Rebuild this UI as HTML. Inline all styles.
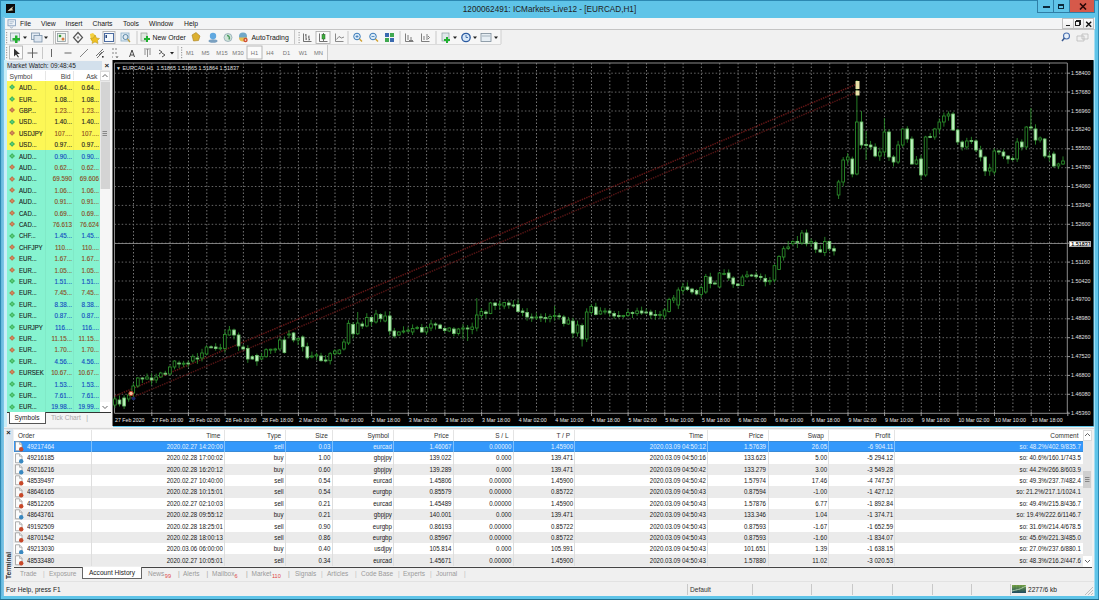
<!DOCTYPE html><html><head><meta charset="utf-8"><style>
*{box-sizing:border-box;margin:0;padding:0}
html,body{width:1099px;height:600px;overflow:hidden}
body{position:relative;background:#5fc4e8;font-family:"Liberation Sans", sans-serif;font-size:8px;color:#222}
.abs{position:absolute}
b{position:absolute}
.cd .bu{fill:#000}
.cd .be{fill:#bff2bf;stroke:#6cc06c}
.pl{position:absolute;left:1071px;font-size:5.4px;color:#e0e0e0;line-height:9px;white-space:nowrap}
.pl.cur{background:#fff;color:#000;left:1069px;width:22px;height:6.6px;padding:0 0 0 1.2px;border:0.6px solid #aaa;line-height:5.6px;top:240.8px !important;overflow:hidden;-webkit-text-stroke:0.15px #000}
.tl{position:absolute;top:415.6px;font-size:5.25px;color:#e8e8e8;line-height:8px;white-space:nowrap}
.title-chart{position:absolute;left:116px;top:63.5px;font-size:5.4px;color:#e0e0e0;white-space:nowrap;line-height:8px}
.mwhead{left:6.5px;top:61px;width:95px;height:9px;background:#d3e0ec;font-size:6.5px;line-height:10px;padding-left:0.5px;color:#1e1e1e}
.mwx{position:absolute;left:98px;top:-0.5px;font-size:8px;font-weight:bold;color:#222}
.mwcols{left:6.5px;top:70px;width:93px;height:11.2px;background:#fff}
.mwcols span{position:absolute;top:1.5px;font-size:6.8px;line-height:9px;color:#444}
.mwcols b{top:1px;width:1px;height:9px;background:#e6e6e6}
.mwr{left:6.5px;width:93px}
.mwr.y{background:#fcf756}
.mwr.m{background:#86f3d0}
.mwr b{top:0;width:1px;height:100%;background:rgba(0,0,0,0.04)}
.mwr span{position:absolute;top:2.1px;font-size:7.2px;line-height:9px;white-space:nowrap;-webkit-text-stroke:0.12px currentColor}
.mwr .sy{left:12px;color:#1a1a1a;transform:scaleX(0.84);transform-origin:0 0}
.mwr .bd{left:39px;width:26px;text-align:right;transform:scaleX(0.87);transform-origin:100% 0}
.mwr .ak{left:66px;width:26px;text-align:right;transform:scaleX(0.87);transform-origin:100% 0}
.mwr .r{color:#8a4a20} .mwr .b{color:#1048c0} .mwr .n{color:#222}
.dm{position:absolute;left:3px;top:4.2px;width:4.2px;height:4.2px;transform:rotate(45deg)}
.dm.g{background:radial-gradient(#6ad88a,#1e9a3e)} .dm.r{background:radial-gradient(#e0946a,#a85a30)}
.thead{top:429.5px;height:11.3px;background:#fff}
.hc{position:absolute;top:2px;font-size:6.5px;line-height:8px;color:#333;white-space:nowrap}
.hsep{top:0;width:1px;height:11px;background:#e4e4e4}
.trow.wh{background:#fff} .trow.alt{background:#ebebeb} .trow.sel{background:#3398fb;color:#e8f4ff;box-shadow:inset 0 1px #3a8bd6,inset 0 -1px #3a8bd6}
.tc{position:absolute;top:2.2px;font-size:6.8px;line-height:8px;white-space:nowrap;color:#161616;transform:scaleX(0.9);transform-origin:100% 0} .tc.l{transform-origin:0 0}
.trow.sel .tc{color:#e8f4ff}
.vsep{top:0;width:1px;height:100%;background:#dedede} .sel .vsep{background:#7fc0fa}
.ticon{position:absolute;left:2.5px;top:1px;width:7px;height:9px;background:#fafafa;border:0.8px solid #9a9a9a}
.ticon::after{content:"";position:absolute;right:-2px;bottom:-2px;width:4.5px;height:4.5px;border-radius:50%}
.ticon.s::after{background:#c84a30} .ticon.b::after{background:#3a8ac0}
.menu span{position:absolute;top:19.5px;font-size:6.8px;line-height:8px;color:#161616}
.tabs span{position:absolute;font-size:6.5px;color:#9a9a9a;top:2.5px;line-height:8px;white-space:nowrap}
.st{position:absolute;top:583.5px;height:11.5px;width:1px;background:#c8c8c8}
.tbt{top:33.5px;font-size:6.9px;line-height:8px;color:#151515;white-space:nowrap}
.tft{top:49px;width:20px;text-align:center;font-size:5.8px;line-height:8px;color:#777}
</style></head><body>
<div class="abs" style="left:0;top:0;width:1099px;height:1px;background:#2c88b2"></div>
<div class="abs" style="left:0;top:0;width:1px;height:600px;background:#2c88b2"></div>
<div class="abs" style="left:1093.5px;top:17px;width:1.5px;height:579px;background:#a6dcf0"></div>
<div class="abs" style="left:1098px;top:0;width:1px;height:600px;background:#2c88b2"></div>
<div class="abs" style="left:0;top:598.5px;width:1099px;height:1.5px;background:#22708f"></div>
<svg class="abs" style="left:6px;top:4px" width="9" height="9"><rect width="9" height="9" fill="#0c0c0c"/><path d="M1.5 7.2C3 5.5 4.5 4 7.8 2.2 6 4.2 5.5 5.5 7.5 6.2 5 6.6 3.2 6.8 1.5 7.2z" fill="#d8d0b0"/></svg>
<div class="abs" style="left:0;top:3.5px;width:1099px;text-align:center;font-size:8.2px;color:#222;line-height:11px;padding-left:0px">1200062491: ICMarkets-Live12 - [EURCAD,H1]</div>
<div class="abs" style="left:1037px;top:0;width:17px;height:12.5px;background:#5fc4e8;border:1px solid #2f7ea6;border-top:0"><div style="position:absolute;left:4.5px;top:6px;width:7px;height:2px;background:#0b2a3c"></div></div>
<div class="abs" style="left:1053.5px;top:0;width:15px;height:12.5px;background:#5fc4e8;border-bottom:1px solid #2f7ea6"><div style="position:absolute;left:4.5px;top:3.5px;width:6px;height:5px;border:1.5px solid #0b2a3c;border-top-width:2px"></div></div>
<div class="abs" style="left:1068.5px;top:0;width:26.5px;height:12.5px;background:#d6594a;border:1px solid #2f7ea6;border-top:0"><svg style="position:absolute;left:9px;top:3px" width="8" height="7"><path d="M1 0.5l6 6M7 0.5l-6 6" stroke="#2a0808" stroke-width="1.6"/></svg></div>
<div class="abs" style="left:4px;top:17.5px;width:1090.5px;height:12px;background:#f3f4f5;border-bottom:1px solid #c4c4c4"></div>
<svg class="abs" style="left:6.5px;top:18.5px" width="10" height="10"><rect x="1" y="0.8" width="7.5" height="6" fill="#eef3f8" stroke="#7c98b8" stroke-width="0.8"/><path d="M2.5 2.8h4.5M2.5 4.6h3" stroke="#90a8c0" stroke-width="0.7"/><path d="M3 7.5l1.5 1.8 1.5-1.8" stroke="#8aa0b8" stroke-width="0.8" fill="none"/></svg>
<div class="abs menu"><span style="left:20px">File</span><span style="left:41px">View</span><span style="left:65.5px">Insert</span><span style="left:92.5px">Charts</span><span style="left:123px">Tools</span><span style="left:149px">Window</span><span style="left:184px">Help</span></div>
<div class="abs" style="left:1062px;top:17.7px;width:32px;height:11.5px;background:linear-gradient(#fdfdfd,#ececec);border:1px solid #c0c0c0"></div>
<div class="abs" style="left:1072.5px;top:18px;width:1px;height:11px;background:#c0c0c0"></div><div class="abs" style="left:1083px;top:18px;width:1px;height:11px;background:#c0c0c0"></div>
<div class="abs" style="left:1065.5px;top:24.5px;width:4px;height:1.5px;background:#222"></div>
<div class="abs" style="left:1075px;top:20.5px;width:5px;height:5px;border:1px solid #222;box-shadow:1px -1px 0 0 #222"></div>
<svg class="abs" style="left:1085px;top:20.5px" width="8" height="7"><path d="M1.2 0.8l5 5M6.2 0.8l-5 5" stroke="#111" stroke-width="1.4"/></svg>
<svg class="abs" style="left:0;top:0" width="1099" height="62" viewBox="0 0 1099 62">
<rect x="4" y="30" width="1090" height="30.5" fill="#f1f1f1"/>
<rect x="4" y="30" width="291" height="14" fill="#f6f6f6"/>
<rect x="297" y="30" width="204" height="14" fill="#f6f6f6"/>
<line x1="4" y1="44.5" x2="501" y2="44.5" stroke="#dadada" stroke-width="1"/>
<rect x="4" y="45" width="323" height="15" fill="#f6f6f6"/>
<line x1="327.5" y1="45" x2="327.5" y2="60" stroke="#c8c8c8"/>
<line x1="501" y1="30" x2="501" y2="44" stroke="#d0d0d0"/>
<line x1="294.5" y1="30" x2="294.5" y2="44" stroke="#c8c8c8" stroke-width="1"/>
<rect x="6.0" y="32" width="1.2" height="1.2" fill="#a0a0a0"/><rect x="6.0" y="34.5" width="1.2" height="1.2" fill="#a0a0a0"/><rect x="6.0" y="37.0" width="1.2" height="1.2" fill="#a0a0a0"/><rect x="6.0" y="39.5" width="1.2" height="1.2" fill="#a0a0a0"/><rect x="6.0" y="42.0" width="1.2" height="1.2" fill="#a0a0a0"/>
<rect x="10.5" y="33" width="9" height="8" fill="#e6eef0" stroke="#8aa0a8" stroke-width="0.8"/>
<path d="M15 35.5h2.5v2.5h2.5v2.5h-2.5v2.5h-2.5v-2.5h-2.5v-2.5h2.5z" fill="#22b030"/>
<path d="M23 36.5h4l-2 2.5z" fill="#222"/>
<rect x="31.5" y="33" width="8" height="6.5" fill="#e4ecf4" stroke="#7890a8" stroke-width="0.8"/>
<rect x="34" y="35.5" width="8" height="6.5" fill="#dde6f0" stroke="#7890a8" stroke-width="0.8"/>
<path d="M44 36.5h4l-2 2.5z" fill="#222"/>
<line x1="53.5" y1="31" x2="53.5" y2="44" stroke="#c8c8c8" stroke-width="1"/>
<rect x="55.5" y="31.5" width="12.5" height="12.0" fill="#fbfbfb" stroke="#a8a8a8" stroke-width="0.8"/>
<rect x="57.5" y="33.5" width="8" height="8" fill="#eef4ea" stroke="#8a9aa0" stroke-width="0.8"/>
<circle cx="60" cy="36" r="1.3" fill="#3a9a3a"/><circle cx="63" cy="39" r="1.5" fill="#d87a40"/>
<path d="M78 32.5l4.5 5-4.5 5-4.5-5z" fill="none" stroke="#555" stroke-width="1.2"/><circle cx="78" cy="37.5" r="1.2" fill="#888"/>
<path d="M90 34l3 -1 3 3-1 4 -4 1z" fill="#f3d040"/><path d="M95 35l1.5 3 3 .5-2 2 .5 3-3-1.5-3 1.5.5-3-2-2 3-.5z" fill="#f0c020" stroke="#b09020" stroke-width="0.5"/>
<rect x="103" y="31.5" width="12" height="12.0" fill="#fbfbfb" stroke="#a8a8a8" stroke-width="0.8"/>
<rect x="104.5" y="33.5" width="9" height="8" fill="#f4f8fc" stroke="#4a6aa0" stroke-width="1"/><rect x="105.5" y="35" width="1.5" height="3" fill="#2a4a80"/>
<rect x="121" y="33" width="8" height="8" fill="#dfeaf2" stroke="#8ab0c8" stroke-width="0.8"/><circle cx="125.5" cy="37" r="2.5" fill="none" stroke="#5a88a8" stroke-width="1"/><line x1="127.5" y1="39" x2="130" y2="42" stroke="#c0a040" stroke-width="1.2"/>
<line x1="137" y1="31" x2="137" y2="44" stroke="#c8c8c8" stroke-width="1"/>
<rect x="141" y="33" width="6" height="8" fill="#e0e8e0" stroke="#909890" stroke-width="0.7"/><path d="M146 36h2v2h2v2h-2v2h-2v-2h-2v-2h2z" fill="#20b030"/>
<path d="M192 35l4-2.5 4 3.5-1.5 4.5-5 .5z" fill="#dcb030" stroke="#a88020" stroke-width="0.6"/>
<ellipse cx="213" cy="41" rx="4.5" ry="1.8" fill="#7aa0c0"/><circle cx="213" cy="36" r="3.2" fill="#60a8e0"/>
<circle cx="228" cy="37.5" r="4" fill="#cfe4d8" stroke="#8aa0b0" stroke-width="0.7"/><path d="M227 35.5c2 0 3 2 2 4" stroke="#4a9a60" stroke-width="1.5" fill="none"/>
<circle cx="243" cy="36.5" r="4" fill="#70a8c8"/><path d="M239 37.5a4 4 0 0 0 8 0z" fill="#e8c050"/><circle cx="245.5" cy="40" r="2.2" fill="#d05030"/><circle cx="245.5" cy="40" r="0.8" fill="#fff"/>
<rect x="298.5" y="32" width="1.2" height="1.2" fill="#a0a0a0"/><rect x="298.5" y="34.5" width="1.2" height="1.2" fill="#a0a0a0"/><rect x="298.5" y="37.0" width="1.2" height="1.2" fill="#a0a0a0"/><rect x="298.5" y="39.5" width="1.2" height="1.2" fill="#a0a0a0"/><rect x="298.5" y="42.0" width="1.2" height="1.2" fill="#a0a0a0"/>
<path d="M303.5 33.5v8h8M306 34v6M305 35h1M306 39h1M309 35.5v5M308 37h1M309 39.5h1" stroke="#444" stroke-width="0.75" fill="none"/>
<rect x="316" y="31.5" width="14" height="12.0" fill="#fbfbfb" stroke="#a8a8a8" stroke-width="0.8"/>
<path d="M319.5 33.5v8h8M323.5 33v8" stroke="#444" stroke-width="0.75" fill="none"/><rect x="322" y="34.5" width="3" height="4.5" fill="#40b040" stroke="#206020" stroke-width="0.5"/>
<path d="M335.5 33.5v8h8M336.5 39.5l2.5-3 2.5 1.5 2.5-1" stroke="#666" stroke-width="0.75" fill="none"/>
<line x1="348" y1="31" x2="348" y2="44" stroke="#c8c8c8" stroke-width="1"/>
<circle cx="357" cy="36.5" r="3.3" fill="#dcecf8" stroke="#3a7ab8" stroke-width="1"/><path d="M355.5 36.5h3M357 35v3" stroke="#3a7ab8" stroke-width="0.8"/><line x1="359.5" y1="39" x2="362" y2="41.5" stroke="#d0a030" stroke-width="1.4"/>
<circle cx="373" cy="36.5" r="3.3" fill="#dcecf8" stroke="#3a7ab8" stroke-width="1"/><path d="M371.5 36.5h3" stroke="#3a7ab8" stroke-width="0.8"/><line x1="375.5" y1="39" x2="378" y2="41.5" stroke="#d0a030" stroke-width="1.4"/>
<rect x="385" y="33" width="4" height="4" fill="#3a6ab0"/><rect x="390" y="33" width="4" height="4" fill="#40a850"/><rect x="385" y="38" width="4" height="4" fill="#40a850"/><rect x="390" y="38" width="4" height="4" fill="#3a6ab0"/>
<line x1="400" y1="31" x2="400" y2="44" stroke="#c8c8c8" stroke-width="1"/>
<path d="M405.5 33.5v8h8M408 35v5M411 37v3M409 40.5h4" stroke="#555" stroke-width="0.75" fill="none"/>
<path d="M421.5 33.5v8h8M424 36v4M427 34v6M428 36l1.5 1.5-1.5 1.5" stroke="#555" stroke-width="0.75" fill="none"/>
<line x1="436" y1="31" x2="436" y2="44" stroke="#c8c8c8" stroke-width="1"/>
<rect x="442" y="33" width="7" height="8" fill="#dfe8ea" stroke="#8a9aa0" stroke-width="0.7"/><path d="M446 37h2v2h2v2h-2v2h-2v-2h-2v-2h2z" fill="#20b030"/><path d="M453 36.5h4l-2 2.5z" fill="#222"/>
<circle cx="466" cy="37.5" r="4.2" fill="#d8e8f8" stroke="#2a5aa0" stroke-width="1.3"/><path d="M466 35v2.5h2" stroke="#2a5aa0" stroke-width="0.8" fill="none"/><path d="M473 36.5h4l-2 2.5z" fill="#222"/>
<rect x="481" y="33.5" width="10" height="8" fill="#e6eef4" stroke="#7a8a98" stroke-width="0.8"/><line x1="482" y1="36" x2="490" y2="36" stroke="#7a8a98" stroke-width="0.6"/><path d="M494 36.5h4l-2 2.5z" fill="#222"/>
<rect x="6.0" y="47" width="1.2" height="1.2" fill="#a0a0a0"/><rect x="6.0" y="49.5" width="1.2" height="1.2" fill="#a0a0a0"/><rect x="6.0" y="52.0" width="1.2" height="1.2" fill="#a0a0a0"/><rect x="6.0" y="54.5" width="1.2" height="1.2" fill="#a0a0a0"/><rect x="6.0" y="57.0" width="1.2" height="1.2" fill="#a0a0a0"/>
<rect x="9.5" y="46" width="13.0" height="13" fill="#fbfbfb" stroke="#a8a8a8" stroke-width="0.8"/>
<path d="M14 48.5v8l2-2 2 3 1-.6-2-3h3z" fill="#333"/>
<path d="M32.5 48v10M27.5 53h10" stroke="#555" stroke-width="0.9"/>
<line x1="42.5" y1="47" x2="42.5" y2="59" stroke="#c8c8c8" stroke-width="1"/>
<line x1="51.5" y1="49" x2="51.5" y2="57" stroke="#666" stroke-width="1"/>
<line x1="64.5" y1="53" x2="71.5" y2="53" stroke="#666" stroke-width="1"/>
<line x1="80" y1="57" x2="88" y2="49" stroke="#777" stroke-width="0.9"/>
<path d="M96 56l7-7M97 58l7-7M99 55l3-3" stroke="#666" stroke-width="0.9"/><rect x="102" y="56" width="1.6" height="1.6" fill="#333"/>
<path d="M112 49h2M115 49h2M112 53h2M115 53h2M112 57h1M116 56l1 2 1-2" stroke="#777" stroke-width="0.9" fill="none"/>
<path d="M129.5 57l2.5-7 2.5 7M130.5 55h3" stroke="#444" stroke-width="1" fill="none"/>
<path d="M144 49h7M147.5 49v8M145 50v5M150 50v5" stroke="#777" stroke-width="0.8" fill="none"/>
<path d="M159 50l3 2-3 2M162 53l3 2-3 2" stroke="#555" stroke-width="1" fill="none"/><path d="M170 52h4l-2 2.5z" fill="#222"/>
<line x1="178" y1="46" x2="178" y2="59" stroke="#c8c8c8" stroke-width="1"/>
<rect x="181.0" y="47" width="1.2" height="1.2" fill="#a0a0a0"/><rect x="181.0" y="49.5" width="1.2" height="1.2" fill="#a0a0a0"/><rect x="181.0" y="52.0" width="1.2" height="1.2" fill="#a0a0a0"/><rect x="181.0" y="54.5" width="1.2" height="1.2" fill="#a0a0a0"/><rect x="181.0" y="57.0" width="1.2" height="1.2" fill="#a0a0a0"/>
<rect x="247" y="46" width="15" height="13" fill="#fbfbfb" stroke="#a8a8a8" stroke-width="0.8"/>
</svg>
<div class="abs tbt" style="left:152.5px">New Order</div>
<div class="abs tbt" style="left:251.5px">AutoTrading</div>
<div class="abs tft" style="left:180px">M1</div>
<div class="abs tft" style="left:195.5px">M5</div>
<div class="abs tft" style="left:212px">M15</div>
<div class="abs tft" style="left:228px">M30</div>
<div class="abs tft" style="left:244.5px">H1</div>
<div class="abs tft" style="left:260px">H4</div>
<div class="abs tft" style="left:276.5px">D1</div>
<div class="abs tft" style="left:293px">W1</div>
<div class="abs tft" style="left:308.5px">MN</div>
<svg class="abs" style="left:1058px;top:31px" width="34" height="14"><circle cx="8.5" cy="5" r="3" fill="#e8f0f8" stroke="#4a70b0" stroke-width="1.1"/><line x1="6.5" y1="7" x2="4" y2="10" stroke="#3a5a90" stroke-width="1.5"/><path d="M19 5h7v5h-7z M24 3h6v5h-6z" fill="#f0f0f0" stroke="#bbb" stroke-width="0.8"/></svg>
<div class="abs" style="left:4px;top:60px;width:109px;height:367px;background:#f4f4f4"></div>
<div class="abs" style="left:1px;top:17px;width:3.5px;height:579px;background:linear-gradient(90deg,#62b6dc,#8ccfee)"></div>
<div class="abs" style="left:4px;top:60px;width:2.5px;height:367px;background:#c8eef8"></div>
<div class="abs mwhead">Market Watch: 09:48:45<span class="mwx">&#215;</span></div>
<div class="abs mwcols"><span style="left:3px">Symbol</span><span style="left:39px;width:25px;text-align:right">Bid</span><span style="left:66px;width:25px;text-align:right">Ask</span><b style="left:38.5px"></b><b style="left:66px"></b></div>
<div class="abs mwr y" style="top:81.2px;height:11.50px"><i class="dm g"></i><span class="sy">AUD...</span><span class="bd n">0.64...</span><span class="ak n">0.64...</span><b style="left:38.5px"></b><b style="left:66px"></b></div>
<div class="abs mwr y" style="top:92.6px;height:11.50px"><i class="dm g"></i><span class="sy">EUR...</span><span class="bd n">1.08...</span><span class="ak n">1.08...</span><b style="left:38.5px"></b><b style="left:66px"></b></div>
<div class="abs mwr y" style="top:104.0px;height:11.50px"><i class="dm r"></i><span class="sy">GBP...</span><span class="bd r">1.23...</span><span class="ak r">1.23...</span><b style="left:38.5px"></b><b style="left:66px"></b></div>
<div class="abs mwr y" style="top:115.4px;height:11.50px"><i class="dm g"></i><span class="sy">USD...</span><span class="bd n">1.40...</span><span class="ak n">1.40...</span><b style="left:38.5px"></b><b style="left:66px"></b></div>
<div class="abs mwr y" style="top:126.8px;height:11.50px"><i class="dm r"></i><span class="sy">USDJPY</span><span class="bd r">107....</span><span class="ak r">107....</span><b style="left:38.5px"></b><b style="left:66px"></b></div>
<div class="abs mwr y" style="top:138.2px;height:11.50px"><i class="dm g"></i><span class="sy">USD...</span><span class="bd n">0.97...</span><span class="ak n">0.97...</span><b style="left:38.5px"></b><b style="left:66px"></b></div>
<div class="abs mwr m" style="top:149.6px;height:11.50px"><i class="dm g"></i><span class="sy">AUD...</span><span class="bd b">0.90...</span><span class="ak b">0.90...</span><b style="left:38.5px"></b><b style="left:66px"></b></div>
<div class="abs mwr m" style="top:161.0px;height:11.50px"><i class="dm r"></i><span class="sy">AUD...</span><span class="bd r">0.62...</span><span class="ak r">0.62...</span><b style="left:38.5px"></b><b style="left:66px"></b></div>
<div class="abs mwr m" style="top:172.4px;height:11.50px"><i class="dm r"></i><span class="sy">AUD...</span><span class="bd r">69.590</span><span class="ak r">69.606</span><b style="left:38.5px"></b><b style="left:66px"></b></div>
<div class="abs mwr m" style="top:183.8px;height:11.50px"><i class="dm r"></i><span class="sy">AUD...</span><span class="bd r">1.06...</span><span class="ak r">1.06...</span><b style="left:38.5px"></b><b style="left:66px"></b></div>
<div class="abs mwr m" style="top:195.2px;height:11.50px"><i class="dm r"></i><span class="sy">AUD...</span><span class="bd r">0.91...</span><span class="ak r">0.91...</span><b style="left:38.5px"></b><b style="left:66px"></b></div>
<div class="abs mwr m" style="top:206.6px;height:11.50px"><i class="dm r"></i><span class="sy">CAD...</span><span class="bd r">0.69...</span><span class="ak r">0.69...</span><b style="left:38.5px"></b><b style="left:66px"></b></div>
<div class="abs mwr m" style="top:218.0px;height:11.50px"><i class="dm r"></i><span class="sy">CAD...</span><span class="bd r">76.613</span><span class="ak r">76.624</span><b style="left:38.5px"></b><b style="left:66px"></b></div>
<div class="abs mwr m" style="top:229.4px;height:11.50px"><i class="dm g"></i><span class="sy">CHF...</span><span class="bd b">1.45...</span><span class="ak b">1.45...</span><b style="left:38.5px"></b><b style="left:66px"></b></div>
<div class="abs mwr m" style="top:240.8px;height:11.50px"><i class="dm r"></i><span class="sy">CHFJPY</span><span class="bd r">110....</span><span class="ak r">110....</span><b style="left:38.5px"></b><b style="left:66px"></b></div>
<div class="abs mwr m" style="top:252.2px;height:11.50px"><i class="dm r"></i><span class="sy">EUR...</span><span class="bd r">1.67...</span><span class="ak r">1.67...</span><b style="left:38.5px"></b><b style="left:66px"></b></div>
<div class="abs mwr m" style="top:263.6px;height:11.50px"><i class="dm r"></i><span class="sy">EUR...</span><span class="bd r">1.05...</span><span class="ak r">1.05...</span><b style="left:38.5px"></b><b style="left:66px"></b></div>
<div class="abs mwr m" style="top:275.0px;height:11.50px"><i class="dm g"></i><span class="sy">EUR...</span><span class="bd b">1.51...</span><span class="ak b">1.51...</span><b style="left:38.5px"></b><b style="left:66px"></b></div>
<div class="abs mwr m" style="top:286.4px;height:11.50px"><i class="dm r"></i><span class="sy">EUR...</span><span class="bd r">7.45...</span><span class="ak r">7.45...</span><b style="left:38.5px"></b><b style="left:66px"></b></div>
<div class="abs mwr m" style="top:297.8px;height:11.50px"><i class="dm g"></i><span class="sy">EUR...</span><span class="bd b">8.38...</span><span class="ak b">8.38...</span><b style="left:38.5px"></b><b style="left:66px"></b></div>
<div class="abs mwr m" style="top:309.2px;height:11.50px"><i class="dm g"></i><span class="sy">EUR...</span><span class="bd b">0.87...</span><span class="ak b">0.87...</span><b style="left:38.5px"></b><b style="left:66px"></b></div>
<div class="abs mwr m" style="top:320.6px;height:11.50px"><i class="dm g"></i><span class="sy">EURJPY</span><span class="bd b">116....</span><span class="ak b">116....</span><b style="left:38.5px"></b><b style="left:66px"></b></div>
<div class="abs mwr m" style="top:332.0px;height:11.50px"><i class="dm r"></i><span class="sy">EUR...</span><span class="bd r">11.15...</span><span class="ak r">11.15...</span><b style="left:38.5px"></b><b style="left:66px"></b></div>
<div class="abs mwr m" style="top:343.4px;height:11.50px"><i class="dm r"></i><span class="sy">EUR...</span><span class="bd r">1.70...</span><span class="ak r">1.70...</span><b style="left:38.5px"></b><b style="left:66px"></b></div>
<div class="abs mwr m" style="top:354.8px;height:11.50px"><i class="dm g"></i><span class="sy">EUR...</span><span class="bd b">4.56...</span><span class="ak b">4.56...</span><b style="left:38.5px"></b><b style="left:66px"></b></div>
<div class="abs mwr m" style="top:366.2px;height:11.50px"><i class="dm r"></i><span class="sy">EURSEK</span><span class="bd r">10.67...</span><span class="ak r">10.67...</span><b style="left:38.5px"></b><b style="left:66px"></b></div>
<div class="abs mwr m" style="top:377.6px;height:11.50px"><i class="dm g"></i><span class="sy">EUR...</span><span class="bd b">1.53...</span><span class="ak b">1.53...</span><b style="left:38.5px"></b><b style="left:66px"></b></div>
<div class="abs mwr m" style="top:389.0px;height:11.50px"><i class="dm g"></i><span class="sy">EUR...</span><span class="bd b">7.61...</span><span class="ak b">7.61...</span><b style="left:38.5px"></b><b style="left:66px"></b></div>
<div class="abs mwr m" style="top:400.4px;height:11.50px"><i class="dm g"></i><span class="sy">EUR...</span><span class="bd b">19.98...</span><span class="ak b">19.99...</span><b style="left:38.5px"></b><b style="left:66px"></b></div>
<div class="abs" style="left:99.5px;top:70px;width:10.5px;height:343px;background:#e9e9e9"></div>
<div class="abs" style="left:100px;top:70.5px;width:9.5px;height:10.5px;background:#fff;border:0.8px solid #dcdcdc"></div>
<svg class="abs" style="left:100px;top:71px" width="10" height="10"><path d="M2.5 6l2.5-2.5 2.5 2.5" stroke="#666" stroke-width="1" fill="none"/></svg>
<div class="abs" style="left:100.5px;top:81.5px;width:9px;height:107px;background:#d4d4d4"></div>
<svg class="abs" style="left:100px;top:130px" width="10" height="8"><path d="M2.5 1.5h4.5M2.5 3.5h4.5M2.5 5.5h4.5" stroke="#666" stroke-width="0.7"/></svg>
<div class="abs" style="left:100px;top:188.5px;width:10px;height:224px;background:#f6f6f6"></div>
<div class="abs" style="left:100px;top:402px;width:9.5px;height:11px;background:#fff"></div>
<svg class="abs" style="left:100px;top:402px" width="10" height="10"><path d="M2.5 4l2.5 2.5 2.5-2.5" stroke="#666" stroke-width="1" fill="none"/></svg>
<div class="abs" style="left:6.5px;top:412px;width:104px;height:1.2px;background:#333"></div>
<div class="abs" style="left:8.5px;top:412px;width:37px;height:11.5px;background:#fff;border:1px solid #555;border-top:0;font-size:6.5px;text-align:center;line-height:11px;color:#222">Symbols</div>
<div class="abs" style="left:51px;top:413px;font-size:6.6px;color:#a8a8a8;line-height:9px;white-space:nowrap">Tick Chart&nbsp;&nbsp; |</div>
<svg class="abs" style="left:0;top:0" width="1099" height="600" viewBox="0 0 1099 600">
<rect x="112.5" y="60" width="981" height="366" fill="#000"/>
<g stroke="#7c7c7c" stroke-width="0.95" stroke-dasharray="1.5 2.0"><line x1="133.5" y1="63" x2="133.5" y2="413.3"/><line x1="151.8" y1="63" x2="151.8" y2="413.3"/><line x1="170.1" y1="63" x2="170.1" y2="413.3"/><line x1="188.5" y1="63" x2="188.5" y2="413.3"/><line x1="206.8" y1="63" x2="206.8" y2="413.3"/><line x1="225.1" y1="63" x2="225.1" y2="413.3"/><line x1="243.4" y1="63" x2="243.4" y2="413.3"/><line x1="261.7" y1="63" x2="261.7" y2="413.3"/><line x1="280.1" y1="63" x2="280.1" y2="413.3"/><line x1="298.4" y1="63" x2="298.4" y2="413.3"/><line x1="316.7" y1="63" x2="316.7" y2="413.3"/><line x1="335.0" y1="63" x2="335.0" y2="413.3"/><line x1="353.3" y1="63" x2="353.3" y2="413.3"/><line x1="371.7" y1="63" x2="371.7" y2="413.3"/><line x1="390.0" y1="63" x2="390.0" y2="413.3"/><line x1="408.3" y1="63" x2="408.3" y2="413.3"/><line x1="426.6" y1="63" x2="426.6" y2="413.3"/><line x1="444.9" y1="63" x2="444.9" y2="413.3"/><line x1="463.3" y1="63" x2="463.3" y2="413.3"/><line x1="481.6" y1="63" x2="481.6" y2="413.3"/><line x1="499.9" y1="63" x2="499.9" y2="413.3"/><line x1="518.2" y1="63" x2="518.2" y2="413.3"/><line x1="536.5" y1="63" x2="536.5" y2="413.3"/><line x1="554.9" y1="63" x2="554.9" y2="413.3"/><line x1="573.2" y1="63" x2="573.2" y2="413.3"/><line x1="591.5" y1="63" x2="591.5" y2="413.3"/><line x1="609.8" y1="63" x2="609.8" y2="413.3"/><line x1="628.1" y1="63" x2="628.1" y2="413.3"/><line x1="646.5" y1="63" x2="646.5" y2="413.3"/><line x1="664.8" y1="63" x2="664.8" y2="413.3"/><line x1="683.1" y1="63" x2="683.1" y2="413.3"/><line x1="701.4" y1="63" x2="701.4" y2="413.3"/><line x1="719.7" y1="63" x2="719.7" y2="413.3"/><line x1="738.1" y1="63" x2="738.1" y2="413.3"/><line x1="756.4" y1="63" x2="756.4" y2="413.3"/><line x1="774.7" y1="63" x2="774.7" y2="413.3"/><line x1="793.0" y1="63" x2="793.0" y2="413.3"/><line x1="811.3" y1="63" x2="811.3" y2="413.3"/><line x1="829.7" y1="63" x2="829.7" y2="413.3"/><line x1="848.0" y1="63" x2="848.0" y2="413.3"/><line x1="866.3" y1="63" x2="866.3" y2="413.3"/><line x1="884.6" y1="63" x2="884.6" y2="413.3"/><line x1="902.9" y1="63" x2="902.9" y2="413.3"/><line x1="921.3" y1="63" x2="921.3" y2="413.3"/><line x1="939.6" y1="63" x2="939.6" y2="413.3"/><line x1="957.9" y1="63" x2="957.9" y2="413.3"/><line x1="976.2" y1="63" x2="976.2" y2="413.3"/><line x1="994.5" y1="63" x2="994.5" y2="413.3"/><line x1="1012.9" y1="63" x2="1012.9" y2="413.3"/><line x1="1031.2" y1="63" x2="1031.2" y2="413.3"/><line x1="1049.5" y1="63" x2="1049.5" y2="413.3"/></g>
<g stroke="#6a6a6a" stroke-width="0.95" stroke-dasharray="1.5 2.1"><line x1="114.5" y1="73.2" x2="1067.3" y2="73.2"/><line x1="114.5" y1="92.1" x2="1067.3" y2="92.1"/><line x1="114.5" y1="111.0" x2="1067.3" y2="111.0"/><line x1="114.5" y1="129.9" x2="1067.3" y2="129.9"/><line x1="114.5" y1="148.8" x2="1067.3" y2="148.8"/><line x1="114.5" y1="167.7" x2="1067.3" y2="167.7"/><line x1="114.5" y1="186.5" x2="1067.3" y2="186.5"/><line x1="114.5" y1="205.4" x2="1067.3" y2="205.4"/><line x1="114.5" y1="224.3" x2="1067.3" y2="224.3"/><line x1="114.5" y1="243.2" x2="1067.3" y2="243.2"/><line x1="114.5" y1="262.1" x2="1067.3" y2="262.1"/><line x1="114.5" y1="281.0" x2="1067.3" y2="281.0"/><line x1="114.5" y1="299.9" x2="1067.3" y2="299.9"/><line x1="114.5" y1="318.8" x2="1067.3" y2="318.8"/><line x1="114.5" y1="337.7" x2="1067.3" y2="337.7"/><line x1="114.5" y1="356.6" x2="1067.3" y2="356.6"/><line x1="114.5" y1="375.4" x2="1067.3" y2="375.4"/><line x1="114.5" y1="394.3" x2="1067.3" y2="394.3"/></g>
<path d="M114.5 63 V413.3 H1067.3 V63 Z" fill="none" stroke="#8a8a8a" stroke-width="1"/>
<g stroke="#aaaaaa" stroke-width="0.9"><line x1="1067.3" y1="73.2" x2="1070" y2="73.2"/><line x1="1067.3" y1="92.1" x2="1070" y2="92.1"/><line x1="1067.3" y1="111.0" x2="1070" y2="111.0"/><line x1="1067.3" y1="129.9" x2="1070" y2="129.9"/><line x1="1067.3" y1="148.8" x2="1070" y2="148.8"/><line x1="1067.3" y1="167.7" x2="1070" y2="167.7"/><line x1="1067.3" y1="186.5" x2="1070" y2="186.5"/><line x1="1067.3" y1="205.4" x2="1070" y2="205.4"/><line x1="1067.3" y1="224.3" x2="1070" y2="224.3"/><line x1="1067.3" y1="243.2" x2="1070" y2="243.2"/><line x1="1067.3" y1="262.1" x2="1070" y2="262.1"/><line x1="1067.3" y1="281.0" x2="1070" y2="281.0"/><line x1="1067.3" y1="299.9" x2="1070" y2="299.9"/><line x1="1067.3" y1="318.8" x2="1070" y2="318.8"/><line x1="1067.3" y1="337.7" x2="1070" y2="337.7"/><line x1="1067.3" y1="356.6" x2="1070" y2="356.6"/><line x1="1067.3" y1="375.4" x2="1070" y2="375.4"/><line x1="1067.3" y1="394.3" x2="1070" y2="394.3"/><line x1="1067.3" y1="413.2" x2="1070" y2="413.2"/><line x1="151.8" y1="411.5" x2="151.8" y2="416"/><line x1="188.4" y1="411.5" x2="188.4" y2="416"/><line x1="225.1" y1="411.5" x2="225.1" y2="416"/><line x1="261.7" y1="411.5" x2="261.7" y2="416"/><line x1="298.4" y1="411.5" x2="298.4" y2="416"/><line x1="335.0" y1="411.5" x2="335.0" y2="416"/><line x1="371.6" y1="411.5" x2="371.6" y2="416"/><line x1="408.3" y1="411.5" x2="408.3" y2="416"/><line x1="444.9" y1="411.5" x2="444.9" y2="416"/><line x1="481.6" y1="411.5" x2="481.6" y2="416"/><line x1="518.2" y1="411.5" x2="518.2" y2="416"/><line x1="554.8" y1="411.5" x2="554.8" y2="416"/><line x1="591.5" y1="411.5" x2="591.5" y2="416"/><line x1="628.1" y1="411.5" x2="628.1" y2="416"/><line x1="664.8" y1="411.5" x2="664.8" y2="416"/><line x1="701.4" y1="411.5" x2="701.4" y2="416"/><line x1="738.0" y1="411.5" x2="738.0" y2="416"/><line x1="774.7" y1="411.5" x2="774.7" y2="416"/><line x1="811.3" y1="411.5" x2="811.3" y2="416"/><line x1="848.0" y1="411.5" x2="848.0" y2="416"/><line x1="884.6" y1="411.5" x2="884.6" y2="416"/><line x1="921.2" y1="411.5" x2="921.2" y2="416"/><line x1="957.9" y1="411.5" x2="957.9" y2="416"/><line x1="994.5" y1="411.5" x2="994.5" y2="416"/><line x1="1031.2" y1="411.5" x2="1031.2" y2="416"/><line x1="1067.8" y1="411.5" x2="1067.8" y2="416"/></g>
<line x1="114.5" y1="243.5" x2="1067.3" y2="243.5" stroke="#909090" stroke-width="0.85"/>
<g stroke-width="1.5" stroke-dasharray="1.4 1.0" fill="none"><line x1="115" y1="396" x2="857.2" y2="83.9" stroke="#641616"/><line x1="131" y1="398" x2="857.2" y2="92.0" stroke="#521414"/></g>
<ellipse cx="133.5" cy="398.5" rx="2" ry="1.8" fill="#1a2a6a"/>
<g stroke="#2c922c" stroke-width="0.85" class="cd"><line x1="114.9" y1="396.6" x2="114.9" y2="407.9"/>
<rect x="113.59" y="399.0" width="2.7" height="6.0" class="bu"/>
<line x1="119.5" y1="395.4" x2="119.5" y2="406.5"/>
<rect x="118.17" y="400.0" width="2.7" height="4.0" class="be"/>
<line x1="124.1" y1="395.4" x2="124.1" y2="409.0"/>
<rect x="122.75" y="398.0" width="2.7" height="8.0" class="be"/>
<line x1="128.7" y1="393.7" x2="128.7" y2="401.7"/>
<rect x="127.33" y="395.0" width="2.7" height="4.0" class="bu"/>
<line x1="133.3" y1="382.8" x2="133.3" y2="396.9"/>
<rect x="131.91" y="386.0" width="2.7" height="7.0" class="bu"/>
<line x1="137.8" y1="377.1" x2="137.8" y2="387.8"/>
<rect x="136.49" y="378.0" width="2.7" height="8.0" class="bu"/>
<line x1="142.4" y1="377.1" x2="142.4" y2="383.0"/>
<rect x="141.07" y="378.0" width="2.7" height="1.0" class="be"/>
<line x1="147.0" y1="373.5" x2="147.0" y2="379.7"/>
<rect x="145.65" y="377.0" width="2.7" height="2.0" class="bu"/>
<line x1="151.6" y1="373.2" x2="151.6" y2="384.8"/>
<rect x="150.23" y="378.0" width="2.7" height="2.0" class="be"/>
<line x1="156.2" y1="373.7" x2="156.2" y2="383.1"/>
<rect x="154.81" y="377.0" width="2.7" height="3.0" class="bu"/>
<line x1="160.7" y1="371.8" x2="160.7" y2="377.6"/>
<rect x="159.39" y="373.0" width="2.7" height="4.0" class="bu"/>
<line x1="165.3" y1="370.8" x2="165.3" y2="374.8"/>
<rect x="163.97" y="373.2" width="2.7" height="1.0" class="be"/>
<line x1="169.9" y1="365.7" x2="169.9" y2="375.5"/>
<rect x="168.55" y="367.0" width="2.7" height="7.0" class="bu"/>
<line x1="174.5" y1="360.3" x2="174.5" y2="369.4"/>
<rect x="173.13" y="361.0" width="2.7" height="6.0" class="bu"/>
<line x1="179.1" y1="360.7" x2="179.1" y2="368.2"/>
<rect x="177.71" y="363.0" width="2.7" height="1.0" class="be"/>
<line x1="183.6" y1="360.8" x2="183.6" y2="367.2"/>
<rect x="182.29" y="363.2" width="2.7" height="1.0" class="bu"/>
<line x1="188.2" y1="360.4" x2="188.2" y2="367.3"/>
<rect x="186.87" y="363.0" width="2.7" height="1.0" class="be"/>
<line x1="192.8" y1="354.3" x2="192.8" y2="362.7"/>
<rect x="191.45" y="356.7" width="2.7" height="4.3" class="bu"/>
<line x1="197.4" y1="353.1" x2="197.4" y2="363.9"/>
<rect x="196.03" y="358.0" width="2.7" height="1.0" class="be"/>
<line x1="202.0" y1="348.8" x2="202.0" y2="361.5"/>
<rect x="200.61" y="353.0" width="2.7" height="5.0" class="bu"/>
<line x1="206.5" y1="345.2" x2="206.5" y2="355.4"/>
<rect x="205.19" y="347.0" width="2.7" height="7.0" class="bu"/>
<line x1="211.1" y1="345.3" x2="211.1" y2="348.3"/>
<rect x="209.77" y="346.8" width="2.7" height="1.0" class="be"/>
<line x1="215.7" y1="343.2" x2="215.7" y2="350.7"/>
<rect x="214.35" y="347.0" width="2.7" height="1.5" class="be"/>
<line x1="220.3" y1="343.8" x2="220.3" y2="350.6"/>
<rect x="218.93" y="347.8" width="2.7" height="1.0" class="bu"/>
<line x1="224.9" y1="329.8" x2="224.9" y2="352.7"/>
<rect x="223.51" y="334.5" width="2.7" height="14.0" class="bu"/>
<line x1="229.4" y1="326.0" x2="229.4" y2="335.6"/>
<rect x="228.09" y="330.0" width="2.7" height="5.0" class="bu"/>
<line x1="234.0" y1="328.6" x2="234.0" y2="339.5"/>
<rect x="232.67" y="330.0" width="2.7" height="5.0" class="be"/>
<line x1="238.6" y1="332.5" x2="238.6" y2="350.8"/>
<rect x="237.25" y="335.0" width="2.7" height="11.0" class="be"/>
<line x1="243.2" y1="344.8" x2="243.2" y2="349.8"/>
<rect x="241.83" y="347.0" width="2.7" height="2.0" class="be"/>
<line x1="247.8" y1="345.3" x2="247.8" y2="362.9"/>
<rect x="246.41" y="348.5" width="2.7" height="10.5" class="be"/>
<line x1="252.3" y1="355.1" x2="252.3" y2="359.9"/>
<rect x="250.99" y="356.7" width="2.7" height="2.3" class="be"/>
<line x1="256.9" y1="353.6" x2="256.9" y2="365.8"/>
<rect x="255.57" y="355.5" width="2.7" height="5.5" class="be"/>
<line x1="261.5" y1="352.9" x2="261.5" y2="360.0"/>
<rect x="260.15" y="356.7" width="2.7" height="2.3" class="bu"/>
<line x1="266.1" y1="348.2" x2="266.1" y2="357.6"/>
<rect x="264.73" y="349.7" width="2.7" height="7.0" class="bu"/>
<line x1="270.7" y1="348.7" x2="270.7" y2="354.0"/>
<rect x="269.31" y="349.2" width="2.7" height="1.0" class="bu"/>
<line x1="275.2" y1="347.8" x2="275.2" y2="352.9"/>
<rect x="273.89" y="349.0" width="2.7" height="1.0" class="bu"/>
<line x1="279.8" y1="337.6" x2="279.8" y2="350.3"/>
<rect x="278.47" y="340.0" width="2.7" height="9.0" class="bu"/>
<line x1="284.4" y1="336.3" x2="284.4" y2="353.6"/>
<rect x="283.05" y="340.0" width="2.7" height="12.5" class="be"/>
<line x1="289.0" y1="330.0" x2="289.0" y2="338.3"/>
<rect x="287.63" y="334.0" width="2.7" height="1.0" class="bu"/>
<line x1="293.6" y1="332.0" x2="293.6" y2="342.3"/>
<rect x="292.21" y="333.0" width="2.7" height="7.0" class="be"/>
<line x1="298.1" y1="337.1" x2="298.1" y2="345.0"/>
<rect x="296.79" y="338.5" width="2.7" height="1.5" class="bu"/>
<line x1="302.7" y1="335.4" x2="302.7" y2="351.5"/>
<rect x="301.37" y="337.0" width="2.7" height="9.7" class="be"/>
<line x1="307.3" y1="342.7" x2="307.3" y2="359.6"/>
<rect x="305.95" y="346.7" width="2.7" height="11.1" class="be"/>
<line x1="311.9" y1="351.6" x2="311.9" y2="358.4"/>
<rect x="310.53" y="356.0" width="2.7" height="1.0" class="bu"/>
<line x1="316.5" y1="352.7" x2="316.5" y2="360.2"/>
<rect x="315.11" y="354.8" width="2.7" height="1.2" class="bu"/>
<line x1="321.0" y1="352.8" x2="321.0" y2="361.6"/>
<rect x="319.69" y="356.0" width="2.7" height="4.7" class="be"/>
<line x1="325.6" y1="355.1" x2="325.6" y2="362.4"/>
<rect x="324.27" y="360.0" width="2.7" height="1.0" class="be"/>
<line x1="330.2" y1="352.1" x2="330.2" y2="364.5"/>
<rect x="328.85" y="353.7" width="2.7" height="7.0" class="bu"/>
<line x1="334.8" y1="349.1" x2="334.8" y2="355.4"/>
<rect x="333.43" y="351.0" width="2.7" height="2.7" class="bu"/>
<line x1="339.4" y1="349.2" x2="339.4" y2="354.6"/>
<rect x="338.01" y="350.0" width="2.7" height="3.7" class="bu"/>
<line x1="343.9" y1="339.0" x2="343.9" y2="350.5"/>
<rect x="342.59" y="342.0" width="2.7" height="7.0" class="bu"/>
<line x1="348.5" y1="320.2" x2="348.5" y2="345.0"/>
<rect x="347.17" y="323.3" width="2.7" height="19.7" class="bu"/>
<line x1="353.1" y1="322.1" x2="353.1" y2="338.5"/>
<rect x="351.75" y="324.5" width="2.7" height="9.3" class="be"/>
<line x1="357.7" y1="312.0" x2="357.7" y2="335.0"/>
<rect x="356.33" y="323.0" width="2.7" height="10.8" class="bu"/>
<line x1="362.3" y1="321.5" x2="362.3" y2="328.9"/>
<rect x="360.91" y="324.0" width="2.7" height="2.0" class="be"/>
<line x1="366.8" y1="313.2" x2="366.8" y2="327.3"/>
<rect x="365.49" y="317.5" width="2.7" height="8.5" class="bu"/>
<line x1="371.4" y1="316.4" x2="371.4" y2="326.1"/>
<rect x="370.07" y="317.5" width="2.7" height="4.1" class="be"/>
<line x1="376.0" y1="309.9" x2="376.0" y2="323.5"/>
<rect x="374.65" y="314.0" width="2.7" height="8.0" class="bu"/>
<line x1="380.6" y1="313.2" x2="380.6" y2="322.2"/>
<rect x="379.23" y="314.5" width="2.7" height="4.0" class="be"/>
<line x1="385.2" y1="311.4" x2="385.2" y2="322.3"/>
<rect x="383.81" y="316.0" width="2.7" height="5.0" class="bu"/>
<line x1="389.7" y1="311.3" x2="389.7" y2="335.4"/>
<rect x="388.39" y="316.0" width="2.7" height="15.0" class="be"/>
<line x1="394.3" y1="327.9" x2="394.3" y2="338.3"/>
<rect x="392.97" y="331.0" width="2.7" height="5.0" class="be"/>
<line x1="398.9" y1="331.1" x2="398.9" y2="335.7"/>
<rect x="397.55" y="332.0" width="2.7" height="3.0" class="bu"/>
<line x1="403.5" y1="326.3" x2="403.5" y2="333.5"/>
<rect x="402.13" y="331.0" width="2.7" height="1.0" class="bu"/>
<line x1="408.1" y1="327.0" x2="408.1" y2="332.6"/>
<rect x="406.71" y="330.2" width="2.7" height="1.0" class="bu"/>
<line x1="412.6" y1="324.4" x2="412.6" y2="335.0"/>
<rect x="411.29" y="328.5" width="2.7" height="3.5" class="bu"/>
<line x1="417.2" y1="325.8" x2="417.2" y2="329.7"/>
<rect x="415.87" y="327.5" width="2.7" height="1.0" class="bu"/>
<line x1="421.8" y1="323.9" x2="421.8" y2="332.8"/>
<rect x="420.45" y="327.5" width="2.7" height="4.5" class="be"/>
<line x1="426.4" y1="326.1" x2="426.4" y2="334.9"/>
<rect x="425.03" y="327.5" width="2.7" height="4.5" class="bu"/>
<line x1="431.0" y1="319.8" x2="431.0" y2="331.1"/>
<rect x="429.61" y="324.0" width="2.7" height="4.0" class="bu"/>
<line x1="435.5" y1="322.3" x2="435.5" y2="329.5"/>
<rect x="434.19" y="324.0" width="2.7" height="1.0" class="be"/>
<line x1="440.1" y1="323.7" x2="440.1" y2="329.1"/>
<rect x="438.77" y="325.0" width="2.7" height="3.5" class="be"/>
<line x1="444.7" y1="326.9" x2="444.7" y2="332.9"/>
<rect x="443.35" y="328.5" width="2.7" height="2.0" class="be"/>
<line x1="449.3" y1="327.2" x2="449.3" y2="332.2"/>
<rect x="447.93" y="328.0" width="2.7" height="3.0" class="bu"/>
<line x1="453.9" y1="327.0" x2="453.9" y2="336.4"/>
<rect x="452.51" y="329.0" width="2.7" height="4.5" class="be"/>
<line x1="458.4" y1="327.9" x2="458.4" y2="335.5"/>
<rect x="457.09" y="329.0" width="2.7" height="4.5" class="bu"/>
<line x1="463.0" y1="324.0" x2="463.0" y2="339.0"/>
<rect x="461.67" y="328.0" width="2.7" height="1.0" class="bu"/>
<line x1="467.6" y1="325.0" x2="467.6" y2="341.0"/>
<rect x="466.25" y="328.0" width="2.7" height="1.0" class="be"/>
<line x1="472.2" y1="322.6" x2="472.2" y2="334.3"/>
<rect x="470.83" y="327.0" width="2.7" height="2.5" class="bu"/>
<line x1="476.8" y1="298.0" x2="476.8" y2="331.3"/>
<rect x="475.41" y="315.0" width="2.7" height="13.0" class="bu"/>
<line x1="481.3" y1="308.0" x2="481.3" y2="318.5"/>
<rect x="479.99" y="311.5" width="2.7" height="4.0" class="bu"/>
<line x1="485.9" y1="310.0" x2="485.9" y2="318.5"/>
<rect x="484.57" y="312.0" width="2.7" height="1.5" class="be"/>
<line x1="490.5" y1="301.9" x2="490.5" y2="314.2"/>
<rect x="489.15" y="303.0" width="2.7" height="10.5" class="bu"/>
<line x1="495.1" y1="302.4" x2="495.1" y2="310.0"/>
<rect x="493.73" y="303.0" width="2.7" height="2.5" class="be"/>
<line x1="499.7" y1="300.5" x2="499.7" y2="309.7"/>
<rect x="498.31" y="304.0" width="2.7" height="1.0" class="bu"/>
<line x1="504.2" y1="301.9" x2="504.2" y2="309.2"/>
<rect x="502.89" y="302.5" width="2.7" height="3.5" class="bu"/>
<line x1="508.8" y1="300.5" x2="508.8" y2="308.7"/>
<rect x="507.47" y="303.0" width="2.7" height="2.0" class="be"/>
<line x1="513.4" y1="300.0" x2="513.4" y2="307.8"/>
<rect x="512.05" y="305.0" width="2.7" height="1.0" class="be"/>
<line x1="518.0" y1="299.6" x2="518.0" y2="312.3"/>
<rect x="516.63" y="304.5" width="2.7" height="7.0" class="be"/>
<line x1="522.6" y1="308.2" x2="522.6" y2="316.2"/>
<rect x="521.21" y="311.0" width="2.7" height="1.5" class="be"/>
<line x1="527.1" y1="308.1" x2="527.1" y2="320.7"/>
<rect x="525.79" y="312.5" width="2.7" height="4.5" class="be"/>
<line x1="531.7" y1="313.5" x2="531.7" y2="321.9"/>
<rect x="530.37" y="317.0" width="2.7" height="1.0" class="be"/>
<line x1="536.3" y1="312.5" x2="536.3" y2="320.0"/>
<rect x="534.95" y="317.0" width="2.7" height="1.0" class="bu"/>
<line x1="540.9" y1="313.6" x2="540.9" y2="322.0"/>
<rect x="539.53" y="316.8" width="2.7" height="1.0" class="be"/>
<line x1="545.5" y1="313.2" x2="545.5" y2="322.5"/>
<rect x="544.11" y="317.5" width="2.7" height="1.0" class="be"/>
<line x1="550.0" y1="314.3" x2="550.0" y2="322.4"/>
<rect x="548.69" y="316.5" width="2.7" height="2.0" class="bu"/>
<line x1="554.6" y1="306.0" x2="554.6" y2="320.8"/>
<rect x="553.27" y="315.5" width="2.7" height="1.0" class="bu"/>
<line x1="559.2" y1="313.1" x2="559.2" y2="319.7"/>
<rect x="557.85" y="315.8" width="2.7" height="1.0" class="be"/>
<line x1="563.8" y1="314.9" x2="563.8" y2="326.5"/>
<rect x="562.43" y="317.0" width="2.7" height="6.5" class="be"/>
<line x1="568.4" y1="316.9" x2="568.4" y2="324.9"/>
<rect x="567.01" y="320.0" width="2.7" height="4.0" class="bu"/>
<line x1="572.9" y1="317.8" x2="572.9" y2="337.9"/>
<rect x="571.59" y="321.0" width="2.7" height="12.0" class="be"/>
<line x1="577.5" y1="320.6" x2="577.5" y2="336.6"/>
<rect x="576.17" y="325.0" width="2.7" height="8.0" class="bu"/>
<line x1="582.1" y1="323.4" x2="582.1" y2="346.5"/>
<rect x="580.75" y="325.5" width="2.7" height="13.5" class="be"/>
<line x1="586.7" y1="308.3" x2="586.7" y2="342.0"/>
<rect x="585.33" y="312.0" width="2.7" height="27.0" class="bu"/>
<line x1="591.3" y1="304.0" x2="591.3" y2="314.8"/>
<rect x="589.91" y="306.5" width="2.7" height="6.0" class="bu"/>
<line x1="595.8" y1="302.8" x2="595.8" y2="315.4"/>
<rect x="594.49" y="307.0" width="2.7" height="7.5" class="be"/>
<line x1="600.4" y1="307.3" x2="600.4" y2="314.7"/>
<rect x="599.07" y="311.0" width="2.7" height="3.0" class="bu"/>
<line x1="605.0" y1="307.9" x2="605.0" y2="314.5"/>
<rect x="603.65" y="311.0" width="2.7" height="1.0" class="bu"/>
<line x1="609.6" y1="309.5" x2="609.6" y2="316.5"/>
<rect x="608.23" y="311.0" width="2.7" height="2.0" class="be"/>
<line x1="614.2" y1="310.9" x2="614.2" y2="319.1"/>
<rect x="612.81" y="313.5" width="2.7" height="2.5" class="be"/>
<line x1="618.7" y1="311.0" x2="618.7" y2="318.1"/>
<rect x="617.39" y="315.5" width="2.7" height="1.0" class="be"/>
<line x1="623.3" y1="314.9" x2="623.3" y2="318.2"/>
<rect x="621.97" y="315.5" width="2.7" height="1.0" class="bu"/>
<line x1="627.9" y1="309.1" x2="627.9" y2="316.8"/>
<rect x="626.55" y="312.5" width="2.7" height="3.0" class="bu"/>
<line x1="632.5" y1="311.3" x2="632.5" y2="318.0"/>
<rect x="631.13" y="312.5" width="2.7" height="1.0" class="be"/>
<line x1="637.1" y1="307.7" x2="637.1" y2="315.9"/>
<rect x="635.71" y="311.0" width="2.7" height="2.5" class="bu"/>
<line x1="641.6" y1="306.6" x2="641.6" y2="314.9"/>
<rect x="640.29" y="311.0" width="2.7" height="2.0" class="be"/>
<line x1="646.2" y1="308.6" x2="646.2" y2="314.3"/>
<rect x="644.87" y="312.0" width="2.7" height="1.0" class="be"/>
<line x1="650.8" y1="309.7" x2="650.8" y2="319.0"/>
<rect x="649.45" y="312.0" width="2.7" height="3.0" class="be"/>
<line x1="655.4" y1="310.0" x2="655.4" y2="319.9"/>
<rect x="654.03" y="314.5" width="2.7" height="1.0" class="be"/>
<line x1="660.0" y1="311.0" x2="660.0" y2="319.0"/>
<rect x="658.61" y="314.5" width="2.7" height="1.0" class="bu"/>
<line x1="664.5" y1="307.9" x2="664.5" y2="319.0"/>
<rect x="663.19" y="310.0" width="2.7" height="6.0" class="bu"/>
<line x1="669.1" y1="297.7" x2="669.1" y2="312.6"/>
<rect x="667.77" y="299.5" width="2.7" height="12.0" class="bu"/>
<line x1="673.7" y1="295.0" x2="673.7" y2="303.0"/>
<rect x="672.35" y="298.0" width="2.7" height="2.0" class="bu"/>
<line x1="678.3" y1="287.4" x2="678.3" y2="309.1"/>
<rect x="676.93" y="290.0" width="2.7" height="15.0" class="bu"/>
<line x1="682.9" y1="282.8" x2="682.9" y2="294.1"/>
<rect x="681.51" y="287.0" width="2.7" height="3.5" class="bu"/>
<line x1="687.4" y1="282.3" x2="687.4" y2="291.1"/>
<rect x="686.09" y="287.0" width="2.7" height="2.5" class="be"/>
<line x1="692.0" y1="287.8" x2="692.0" y2="294.4"/>
<rect x="690.67" y="289.0" width="2.7" height="3.0" class="be"/>
<line x1="696.6" y1="288.9" x2="696.6" y2="295.4"/>
<rect x="695.25" y="290.5" width="2.7" height="3.5" class="be"/>
<line x1="701.2" y1="285.3" x2="701.2" y2="297.7"/>
<rect x="699.83" y="287.5" width="2.7" height="7.0" class="bu"/>
<line x1="705.8" y1="273.9" x2="705.8" y2="293.8"/>
<rect x="704.41" y="276.5" width="2.7" height="15.5" class="bu"/>
<line x1="710.3" y1="272.8" x2="710.3" y2="288.3"/>
<rect x="708.99" y="277.0" width="2.7" height="6.5" class="be"/>
<line x1="714.9" y1="280.6" x2="714.9" y2="284.8"/>
<rect x="713.57" y="283.0" width="2.7" height="1.0" class="be"/>
<line x1="719.5" y1="272.0" x2="719.5" y2="287.7"/>
<rect x="718.15" y="273.0" width="2.7" height="14.0" class="bu"/>
<line x1="724.1" y1="269.2" x2="724.1" y2="275.2"/>
<rect x="722.73" y="273.5" width="2.7" height="1.0" class="bu"/>
<line x1="728.7" y1="269.4" x2="728.7" y2="280.9"/>
<rect x="727.31" y="273.0" width="2.7" height="5.0" class="be"/>
<line x1="733.2" y1="276.2" x2="733.2" y2="287.9"/>
<rect x="731.89" y="278.0" width="2.7" height="6.0" class="be"/>
<line x1="737.8" y1="283.4" x2="737.8" y2="286.6"/>
<rect x="736.47" y="284.0" width="2.7" height="1.5" class="be"/>
<line x1="742.4" y1="274.6" x2="742.4" y2="286.1"/>
<rect x="741.05" y="277.0" width="2.7" height="8.5" class="bu"/>
<line x1="747.0" y1="270.9" x2="747.0" y2="278.2"/>
<rect x="745.63" y="275.0" width="2.7" height="1.7" class="bu"/>
<line x1="751.6" y1="273.9" x2="751.6" y2="276.7"/>
<rect x="750.21" y="275.0" width="2.7" height="1.0" class="be"/>
<line x1="756.1" y1="271.8" x2="756.1" y2="279.1"/>
<rect x="754.79" y="275.0" width="2.7" height="1.7" class="be"/>
<line x1="760.7" y1="273.5" x2="760.7" y2="280.3"/>
<rect x="759.37" y="276.4" width="2.7" height="1.0" class="be"/>
<line x1="765.3" y1="274.4" x2="765.3" y2="286.4"/>
<rect x="763.95" y="278.4" width="2.7" height="3.3" class="be"/>
<line x1="769.9" y1="277.1" x2="769.9" y2="285.0"/>
<rect x="768.53" y="280.5" width="2.7" height="1.2" class="bu"/>
<line x1="774.5" y1="264.4" x2="774.5" y2="282.5"/>
<rect x="773.11" y="265.7" width="2.7" height="14.3" class="bu"/>
<line x1="779.0" y1="255.2" x2="779.0" y2="270.1"/>
<rect x="777.69" y="256.4" width="2.7" height="13.1" class="bu"/>
<line x1="783.6" y1="246.2" x2="783.6" y2="260.6"/>
<rect x="782.27" y="248.7" width="2.7" height="8.3" class="bu"/>
<line x1="788.2" y1="241.0" x2="788.2" y2="250.0"/>
<rect x="786.85" y="247.0" width="2.7" height="1.5" class="bu"/>
<line x1="792.8" y1="240.3" x2="792.8" y2="245.3"/>
<rect x="791.43" y="241.5" width="2.7" height="2.2" class="bu"/>
<line x1="797.4" y1="236.0" x2="797.4" y2="248.0"/>
<rect x="796.01" y="241.5" width="2.7" height="1.1" class="be"/>
<line x1="801.9" y1="230.0" x2="801.9" y2="244.9"/>
<rect x="800.59" y="233.0" width="2.7" height="10.0" class="bu"/>
<line x1="806.5" y1="229.5" x2="806.5" y2="246.4"/>
<rect x="805.17" y="233.0" width="2.7" height="10.7" class="be"/>
<line x1="811.1" y1="238.4" x2="811.1" y2="246.8"/>
<rect x="809.75" y="241.5" width="2.7" height="1.5" class="bu"/>
<line x1="815.7" y1="240.5" x2="815.7" y2="253.1"/>
<rect x="814.33" y="242.6" width="2.7" height="6.6" class="be"/>
<line x1="820.3" y1="245.3" x2="820.3" y2="252.9"/>
<rect x="818.91" y="249.8" width="2.7" height="2.2" class="be"/>
<line x1="824.8" y1="236.9" x2="824.8" y2="256.1"/>
<rect x="823.49" y="241.5" width="2.7" height="11.0" class="bu"/>
<line x1="829.4" y1="240.5" x2="829.4" y2="251.1"/>
<rect x="828.07" y="241.5" width="2.7" height="7.2" class="be"/>
<line x1="834.0" y1="245.5" x2="834.0" y2="255.5"/>
<rect x="832.65" y="248.7" width="2.7" height="2.3" class="be"/>
<line x1="838.6" y1="179.9" x2="838.6" y2="199.0"/>
<rect x="837.23" y="182.0" width="2.7" height="13.0" class="bu"/>
<line x1="843.2" y1="157.1" x2="843.2" y2="186.3"/>
<rect x="841.81" y="160.0" width="2.7" height="22.0" class="bu"/>
<line x1="847.7" y1="153.0" x2="847.7" y2="164.7"/>
<rect x="846.39" y="157.0" width="2.7" height="3.0" class="bu"/>
<line x1="852.3" y1="156.6" x2="852.3" y2="177.3"/>
<rect x="850.97" y="159.0" width="2.7" height="15.0" class="be"/>
<line x1="856.9" y1="80.0" x2="856.9" y2="175.3"/>
<rect x="855.55" y="122.0" width="2.7" height="52.0" class="bu"/>
<line x1="861.5" y1="111.0" x2="861.5" y2="148.6"/>
<rect x="860.13" y="122.0" width="2.7" height="23.0" class="be"/>
<line x1="866.1" y1="131.0" x2="866.1" y2="160.0"/>
<rect x="864.71" y="144.5" width="2.7" height="1.0" class="be"/>
<line x1="870.6" y1="140.9" x2="870.6" y2="150.2"/>
<rect x="869.29" y="145.0" width="2.7" height="2.0" class="be"/>
<line x1="875.2" y1="143.4" x2="875.2" y2="157.4"/>
<rect x="873.87" y="147.0" width="2.7" height="9.0" class="be"/>
<line x1="879.8" y1="147.6" x2="879.8" y2="160.8"/>
<rect x="878.45" y="152.0" width="2.7" height="4.0" class="bu"/>
<line x1="884.4" y1="118.0" x2="884.4" y2="156.8"/>
<rect x="883.03" y="132.0" width="2.7" height="20.0" class="bu"/>
<line x1="889.0" y1="129.2" x2="889.0" y2="160.9"/>
<rect x="887.61" y="132.0" width="2.7" height="25.0" class="be"/>
<line x1="893.5" y1="155.2" x2="893.5" y2="166.5"/>
<rect x="892.19" y="157.0" width="2.7" height="5.0" class="be"/>
<line x1="898.1" y1="140.8" x2="898.1" y2="163.9"/>
<rect x="896.77" y="145.0" width="2.7" height="17.0" class="bu"/>
<line x1="902.7" y1="128.1" x2="902.7" y2="147.3"/>
<rect x="901.35" y="129.0" width="2.7" height="16.0" class="bu"/>
<line x1="907.3" y1="126.2" x2="907.3" y2="142.8"/>
<rect x="905.93" y="129.0" width="2.7" height="10.0" class="be"/>
<line x1="911.9" y1="136.4" x2="911.9" y2="164.7"/>
<rect x="910.51" y="139.0" width="2.7" height="25.0" class="be"/>
<line x1="916.4" y1="156.0" x2="916.4" y2="164.8"/>
<rect x="915.09" y="160.0" width="2.7" height="4.0" class="bu"/>
<line x1="921.0" y1="155.0" x2="921.0" y2="180.0"/>
<rect x="919.67" y="159.0" width="2.7" height="16.0" class="be"/>
<line x1="925.6" y1="135.8" x2="925.6" y2="176.9"/>
<rect x="924.25" y="137.0" width="2.7" height="38.0" class="bu"/>
<line x1="930.2" y1="133.1" x2="930.2" y2="138.1"/>
<rect x="928.83" y="136.5" width="2.7" height="1.0" class="be"/>
<line x1="934.8" y1="127.9" x2="934.8" y2="139.7"/>
<rect x="933.41" y="129.0" width="2.7" height="8.0" class="bu"/>
<line x1="939.3" y1="118.4" x2="939.3" y2="133.2"/>
<rect x="937.99" y="122.0" width="2.7" height="7.0" class="bu"/>
<line x1="943.9" y1="112.5" x2="943.9" y2="126.7"/>
<rect x="942.57" y="116.0" width="2.7" height="6.0" class="bu"/>
<line x1="948.5" y1="111.4" x2="948.5" y2="120.7"/>
<rect x="947.15" y="114.0" width="2.7" height="2.0" class="bu"/>
<line x1="953.1" y1="112.0" x2="953.1" y2="130.9"/>
<rect x="951.73" y="114.0" width="2.7" height="16.0" class="be"/>
<line x1="957.7" y1="128.6" x2="957.7" y2="144.7"/>
<rect x="956.31" y="130.0" width="2.7" height="12.0" class="be"/>
<line x1="962.2" y1="140.3" x2="962.2" y2="150.6"/>
<rect x="960.89" y="142.0" width="2.7" height="5.0" class="be"/>
<line x1="966.8" y1="137.8" x2="966.8" y2="149.7"/>
<rect x="965.47" y="141.0" width="2.7" height="6.0" class="bu"/>
<line x1="971.4" y1="136.8" x2="971.4" y2="143.9"/>
<rect x="970.05" y="140.5" width="2.7" height="1.0" class="be"/>
<line x1="976.0" y1="139.2" x2="976.0" y2="152.1"/>
<rect x="974.63" y="141.0" width="2.7" height="9.0" class="be"/>
<line x1="980.6" y1="145.8" x2="980.6" y2="161.4"/>
<rect x="979.21" y="150.0" width="2.7" height="7.0" class="be"/>
<line x1="985.1" y1="155.6" x2="985.1" y2="176.0"/>
<rect x="983.79" y="157.0" width="2.7" height="14.0" class="be"/>
<line x1="989.7" y1="163.8" x2="989.7" y2="175.8"/>
<rect x="988.37" y="168.0" width="2.7" height="3.0" class="bu"/>
<line x1="994.3" y1="148.3" x2="994.3" y2="174.9"/>
<rect x="992.95" y="151.0" width="2.7" height="21.0" class="bu"/>
<line x1="998.9" y1="149.7" x2="998.9" y2="154.8"/>
<rect x="997.53" y="151.0" width="2.7" height="1.0" class="be"/>
<line x1="1003.5" y1="149.4" x2="1003.5" y2="159.1"/>
<rect x="1002.11" y="152.0" width="2.7" height="4.0" class="be"/>
<line x1="1008.0" y1="155.3" x2="1008.0" y2="163.8"/>
<rect x="1006.69" y="156.0" width="2.7" height="3.0" class="be"/>
<line x1="1012.6" y1="156.3" x2="1012.6" y2="161.2"/>
<rect x="1011.27" y="158.5" width="2.7" height="1.0" class="be"/>
<line x1="1017.2" y1="138.0" x2="1017.2" y2="161.9"/>
<rect x="1015.85" y="142.0" width="2.7" height="17.0" class="bu"/>
<line x1="1021.8" y1="139.4" x2="1021.8" y2="150.5"/>
<rect x="1020.43" y="142.0" width="2.7" height="5.0" class="be"/>
<line x1="1026.4" y1="126.2" x2="1026.4" y2="149.8"/>
<rect x="1025.01" y="127.0" width="2.7" height="20.0" class="bu"/>
<line x1="1030.9" y1="108.0" x2="1030.9" y2="130.2"/>
<rect x="1029.59" y="127.0" width="2.7" height="1.0" class="be"/>
<line x1="1035.5" y1="124.3" x2="1035.5" y2="144.6"/>
<rect x="1034.17" y="129.0" width="2.7" height="11.0" class="be"/>
<line x1="1040.1" y1="136.4" x2="1040.1" y2="142.5"/>
<rect x="1038.75" y="138.0" width="2.7" height="2.0" class="bu"/>
<line x1="1044.7" y1="138.0" x2="1044.7" y2="158.3"/>
<rect x="1043.33" y="139.0" width="2.7" height="17.0" class="be"/>
<line x1="1049.3" y1="152.0" x2="1049.3" y2="161.4"/>
<rect x="1047.91" y="156.0" width="2.7" height="1.0" class="be"/>
<line x1="1053.8" y1="151.5" x2="1053.8" y2="167.8"/>
<rect x="1052.49" y="154.0" width="2.7" height="12.0" class="be"/>
<line x1="1058.4" y1="162.7" x2="1058.4" y2="169.1"/>
<rect x="1057.07" y="164.0" width="2.7" height="2.0" class="bu"/>
<line x1="1063.0" y1="156.4" x2="1063.0" y2="165.0"/>
<rect x="1061.65" y="161.0" width="2.7" height="3.0" class="bu"/></g>
<circle cx="131" cy="393.5" r="2.2" fill="#f0c0a0" stroke="#c03020" stroke-width="0.9"/>
<path d="M855.5 81h4v8h-4z M855.5 90.5h4v5h-4z" fill="#e8e2a8"/>
</svg>
<div class="pl" style="top:68.7px">1.58400</div>
<div class="pl" style="top:87.6px">1.57680</div>
<div class="pl" style="top:106.5px">1.56960</div>
<div class="pl" style="top:125.4px">1.56240</div>
<div class="pl" style="top:144.3px">1.55500</div>
<div class="pl" style="top:163.2px">1.54780</div>
<div class="pl" style="top:182.0px">1.54060</div>
<div class="pl" style="top:200.9px">1.53340</div>
<div class="pl" style="top:219.8px">1.52600</div>
<div class="pl" style="top:257.6px">1.51160</div>
<div class="pl" style="top:276.5px">1.50420</div>
<div class="pl" style="top:295.4px">1.49700</div>
<div class="pl" style="top:314.3px">1.48980</div>
<div class="pl" style="top:333.2px">1.48260</div>
<div class="pl" style="top:352.1px">1.47520</div>
<div class="pl" style="top:370.9px">1.46800</div>
<div class="pl" style="top:389.8px">1.46080</div>
<div class="pl" style="top:408.7px">1.45360</div>
<div class="pl cur" style="top:239px">1.51837</div>
<div class="tl" style="left:115.0px">27 Feb 2020</div>
<div class="tl" style="left:152.3px">27 Feb 18:00</div>
<div class="tl" style="left:188.9px">28 Feb 02:00</div>
<div class="tl" style="left:225.6px">28 Feb 10:00</div>
<div class="tl" style="left:262.2px">28 Feb 18:00</div>
<div class="tl" style="left:298.9px">2 Mar 02:00</div>
<div class="tl" style="left:335.5px">2 Mar 10:00</div>
<div class="tl" style="left:372.1px">2 Mar 18:00</div>
<div class="tl" style="left:408.8px">3 Mar 02:00</div>
<div class="tl" style="left:445.4px">3 Mar 10:00</div>
<div class="tl" style="left:482.1px">3 Mar 18:00</div>
<div class="tl" style="left:518.7px">4 Mar 02:00</div>
<div class="tl" style="left:555.3px">4 Mar 10:00</div>
<div class="tl" style="left:592.0px">4 Mar 18:00</div>
<div class="tl" style="left:628.6px">5 Mar 02:00</div>
<div class="tl" style="left:665.3px">5 Mar 10:00</div>
<div class="tl" style="left:701.9px">5 Mar 18:00</div>
<div class="tl" style="left:738.5px">6 Mar 02:00</div>
<div class="tl" style="left:775.2px">6 Mar 10:00</div>
<div class="tl" style="left:811.8px">6 Mar 18:00</div>
<div class="tl" style="left:848.5px">9 Mar 02:00</div>
<div class="tl" style="left:885.1px">9 Mar 10:00</div>
<div class="tl" style="left:921.7px">9 Mar 18:00</div>
<div class="tl" style="left:958.4px">10 Mar 02:00</div>
<div class="tl" style="left:995.0px">10 Mar 10:00</div>
<div class="tl" style="left:1031.7px">10 Mar 18:00</div>
<div class="title-chart"><span style="font-size:5px">&#9660;</span> EURCAD,H1&nbsp; 1.51865 1.51865 1.51864 1.51837</div>
<div class="abs" style="left:4px;top:427px;width:1090px;height:155px;background:#f0f0f0"></div>
<div class="abs" style="left:4px;top:427.5px;width:1090px;height:1px;background:#d8d8d8"></div>
<div class="abs" style="left:4.5px;top:429px;width:8.5px;height:137px;background:linear-gradient(90deg,#e4eef6,#d8e2ec)"></div>
<div class="abs" style="left:4.5px;top:428px;width:8px;font-size:7.5px;font-weight:bold;color:#222;text-align:center;line-height:9px">&#215;</div>
<div class="abs" style="left:4.5px;top:579px;transform:rotate(-90deg);transform-origin:left top;font-size:6.6px;font-weight:bold;color:#333;width:26px;line-height:8.5px;white-space:nowrap">Terminal</div>
<div class="abs thead" style="left:13.5px;width:1069.0px">
<span class="hc" style="left:4.5px">Order</span>
<b class="hsep" style="left:77.8px"></b>
<span class="hc" style="left:77.8px;width:129.1px;text-align:right">Time</span>
<b class="hsep" style="left:210.9px"></b>
<span class="hc" style="left:210.9px;width:56.8px;text-align:right">Type</span>
<b class="hsep" style="left:271.7px"></b>
<span class="hc" style="left:271.7px;width:42.7px;text-align:right">Size</span>
<b class="hsep" style="left:318.4px"></b>
<span class="hc" style="left:318.4px;width:57.2px;text-align:right">Symbol</span>
<b class="hsep" style="left:379.6px"></b>
<span class="hc" style="left:379.6px;width:55.8px;text-align:right">Price</span>
<b class="hsep" style="left:439.4px"></b>
<span class="hc" style="left:439.4px;width:55.7px;text-align:right">S / L</span>
<b class="hsep" style="left:499.1px"></b>
<span class="hc" style="left:499.1px;width:57.4px;text-align:right">T / P</span>
<b class="hsep" style="left:560.5px"></b>
<span class="hc" style="left:560.5px;width:129.2px;text-align:right">Time</span>
<b class="hsep" style="left:693.7px"></b>
<span class="hc" style="left:693.7px;width:56.3px;text-align:right">Price</span>
<b class="hsep" style="left:754.0px"></b>
<span class="hc" style="left:754.0px;width:56.4px;text-align:right">Swap</span>
<b class="hsep" style="left:814.4px"></b>
<span class="hc" style="left:814.4px;width:62.5px;text-align:right">Profit</span>
<b class="hsep" style="left:880.9px"></b>
<span class="hc" style="left:880.9px;width:184.1px;text-align:right">Comment</span>
</div>
<div class="abs trow sel" style="top:440.80px;left:13.5px;width:1069.0px;height:11.41px">
<svg class="abs" style="left:0.8px;top:0.5px" width="10" height="11"><path d="M1.5 0.8h4l2.5 2.5v6.5h-6.5z" fill="#fbfbfb" stroke="#8c8c8c" stroke-width="0.7"/><path d="M5.5 0.8v2.5h2.5" fill="#e0e0e0" stroke="#9a9a9a" stroke-width="0.6"/><circle cx="7.2" cy="8.2" r="2.2" fill="#c8482a"/></svg><span class="tc l" style="left:13px">49217464</span>
<span class="tc" style="left:77.8px;width:131.8px;text-align:right">2020.02.27 14:20:00</span>
<b class="vsep" style="left:210.9px"></b>
<span class="tc" style="left:210.9px;width:59.5px;text-align:right">sell</span>
<b class="vsep" style="left:271.7px"></b>
<span class="tc" style="left:271.7px;width:45.4px;text-align:right">0.03</span>
<b class="vsep" style="left:318.4px"></b>
<span class="tc" style="left:318.4px;width:59.9px;text-align:right">eurcad</span>
<b class="vsep" style="left:379.6px"></b>
<span class="tc" style="left:379.6px;width:58.5px;text-align:right">1.46067</span>
<b class="vsep" style="left:439.4px"></b>
<span class="tc" style="left:439.4px;width:58.4px;text-align:right">0.00000</span>
<b class="vsep" style="left:499.1px"></b>
<span class="tc" style="left:499.1px;width:60.1px;text-align:right">1.45900</span>
<b class="vsep" style="left:560.5px"></b>
<span class="tc" style="left:560.5px;width:131.9px;text-align:right">2020.03.09 04:50:12</span>
<b class="vsep" style="left:693.7px"></b>
<span class="tc" style="left:693.7px;width:59.0px;text-align:right">1.57639</span>
<b class="vsep" style="left:754.0px"></b>
<span class="tc" style="left:754.0px;width:59.1px;text-align:right">26.05</span>
<b class="vsep" style="left:814.4px"></b>
<span class="tc" style="left:814.4px;width:65.2px;text-align:right">-6 904.11</span>
<b class="vsep" style="left:880.9px"></b>
<span class="tc" style="left:880.9px;width:186.8px;text-align:right">so: 48.2%/402.9/835.7</span>
<b class="vsep" style="left:77.8px"></b>
</div>
<div class="abs trow wh" style="top:452.16px;left:13.5px;width:1069.0px;height:11.41px">
<svg class="abs" style="left:0.8px;top:0.5px" width="10" height="11"><path d="M1.5 0.8h4l2.5 2.5v6.5h-6.5z" fill="#fbfbfb" stroke="#8c8c8c" stroke-width="0.7"/><path d="M5.5 0.8v2.5h2.5" fill="#e0e0e0" stroke="#9a9a9a" stroke-width="0.6"/><circle cx="7.2" cy="8.2" r="2.2" fill="#3a88c0"/></svg><span class="tc l" style="left:13px">49216185</span>
<span class="tc" style="left:77.8px;width:131.8px;text-align:right">2020.02.28 17:00:02</span>
<b class="vsep" style="left:210.9px"></b>
<span class="tc" style="left:210.9px;width:59.5px;text-align:right">buy</span>
<b class="vsep" style="left:271.7px"></b>
<span class="tc" style="left:271.7px;width:45.4px;text-align:right">1.00</span>
<b class="vsep" style="left:318.4px"></b>
<span class="tc" style="left:318.4px;width:59.9px;text-align:right">gbpjpy</span>
<b class="vsep" style="left:379.6px"></b>
<span class="tc" style="left:379.6px;width:58.5px;text-align:right">139.022</span>
<b class="vsep" style="left:439.4px"></b>
<span class="tc" style="left:439.4px;width:58.4px;text-align:right">0.000</span>
<b class="vsep" style="left:499.1px"></b>
<span class="tc" style="left:499.1px;width:60.1px;text-align:right">139.471</span>
<b class="vsep" style="left:560.5px"></b>
<span class="tc" style="left:560.5px;width:131.9px;text-align:right">2020.03.09 04:50:16</span>
<b class="vsep" style="left:693.7px"></b>
<span class="tc" style="left:693.7px;width:59.0px;text-align:right">133.623</span>
<b class="vsep" style="left:754.0px"></b>
<span class="tc" style="left:754.0px;width:59.1px;text-align:right">5.00</span>
<b class="vsep" style="left:814.4px"></b>
<span class="tc" style="left:814.4px;width:65.2px;text-align:right">-5 294.12</span>
<b class="vsep" style="left:880.9px"></b>
<span class="tc" style="left:880.9px;width:186.8px;text-align:right">so: 40.6%/160.1/743.5</span>
<b class="vsep" style="left:77.8px"></b>
</div>
<div class="abs trow alt" style="top:463.52px;left:13.5px;width:1069.0px;height:11.41px">
<svg class="abs" style="left:0.8px;top:0.5px" width="10" height="11"><path d="M1.5 0.8h4l2.5 2.5v6.5h-6.5z" fill="#fbfbfb" stroke="#8c8c8c" stroke-width="0.7"/><path d="M5.5 0.8v2.5h2.5" fill="#e0e0e0" stroke="#9a9a9a" stroke-width="0.6"/><circle cx="7.2" cy="8.2" r="2.2" fill="#3a88c0"/></svg><span class="tc l" style="left:13px">49216216</span>
<span class="tc" style="left:77.8px;width:131.8px;text-align:right">2020.02.28 16:20:12</span>
<b class="vsep" style="left:210.9px"></b>
<span class="tc" style="left:210.9px;width:59.5px;text-align:right">buy</span>
<b class="vsep" style="left:271.7px"></b>
<span class="tc" style="left:271.7px;width:45.4px;text-align:right">0.60</span>
<b class="vsep" style="left:318.4px"></b>
<span class="tc" style="left:318.4px;width:59.9px;text-align:right">gbpjpy</span>
<b class="vsep" style="left:379.6px"></b>
<span class="tc" style="left:379.6px;width:58.5px;text-align:right">139.289</span>
<b class="vsep" style="left:439.4px"></b>
<span class="tc" style="left:439.4px;width:58.4px;text-align:right">0.000</span>
<b class="vsep" style="left:499.1px"></b>
<span class="tc" style="left:499.1px;width:60.1px;text-align:right">139.471</span>
<b class="vsep" style="left:560.5px"></b>
<span class="tc" style="left:560.5px;width:131.9px;text-align:right">2020.03.09 04:50:42</span>
<b class="vsep" style="left:693.7px"></b>
<span class="tc" style="left:693.7px;width:59.0px;text-align:right">133.279</span>
<b class="vsep" style="left:754.0px"></b>
<span class="tc" style="left:754.0px;width:59.1px;text-align:right">3.00</span>
<b class="vsep" style="left:814.4px"></b>
<span class="tc" style="left:814.4px;width:65.2px;text-align:right">-3 549.28</span>
<b class="vsep" style="left:880.9px"></b>
<span class="tc" style="left:880.9px;width:186.8px;text-align:right">so: 44.2%/266.8/603.9</span>
<b class="vsep" style="left:77.8px"></b>
</div>
<div class="abs trow wh" style="top:474.88px;left:13.5px;width:1069.0px;height:11.41px">
<svg class="abs" style="left:0.8px;top:0.5px" width="10" height="11"><path d="M1.5 0.8h4l2.5 2.5v6.5h-6.5z" fill="#fbfbfb" stroke="#8c8c8c" stroke-width="0.7"/><path d="M5.5 0.8v2.5h2.5" fill="#e0e0e0" stroke="#9a9a9a" stroke-width="0.6"/><circle cx="7.2" cy="8.2" r="2.2" fill="#c8482a"/></svg><span class="tc l" style="left:13px">48539497</span>
<span class="tc" style="left:77.8px;width:131.8px;text-align:right">2020.02.27 10:40:00</span>
<b class="vsep" style="left:210.9px"></b>
<span class="tc" style="left:210.9px;width:59.5px;text-align:right">sell</span>
<b class="vsep" style="left:271.7px"></b>
<span class="tc" style="left:271.7px;width:45.4px;text-align:right">0.54</span>
<b class="vsep" style="left:318.4px"></b>
<span class="tc" style="left:318.4px;width:59.9px;text-align:right">eurcad</span>
<b class="vsep" style="left:379.6px"></b>
<span class="tc" style="left:379.6px;width:58.5px;text-align:right">1.45806</span>
<b class="vsep" style="left:439.4px"></b>
<span class="tc" style="left:439.4px;width:58.4px;text-align:right">0.00000</span>
<b class="vsep" style="left:499.1px"></b>
<span class="tc" style="left:499.1px;width:60.1px;text-align:right">1.45900</span>
<b class="vsep" style="left:560.5px"></b>
<span class="tc" style="left:560.5px;width:131.9px;text-align:right">2020.03.09 04:50:42</span>
<b class="vsep" style="left:693.7px"></b>
<span class="tc" style="left:693.7px;width:59.0px;text-align:right">1.57974</span>
<b class="vsep" style="left:754.0px"></b>
<span class="tc" style="left:754.0px;width:59.1px;text-align:right">17.46</span>
<b class="vsep" style="left:814.4px"></b>
<span class="tc" style="left:814.4px;width:65.2px;text-align:right">-4 747.57</span>
<b class="vsep" style="left:880.9px"></b>
<span class="tc" style="left:880.9px;width:186.8px;text-align:right">so: 49.3%/237.7/482.4</span>
<b class="vsep" style="left:77.8px"></b>
</div>
<div class="abs trow alt" style="top:486.24px;left:13.5px;width:1069.0px;height:11.41px">
<svg class="abs" style="left:0.8px;top:0.5px" width="10" height="11"><path d="M1.5 0.8h4l2.5 2.5v6.5h-6.5z" fill="#fbfbfb" stroke="#8c8c8c" stroke-width="0.7"/><path d="M5.5 0.8v2.5h2.5" fill="#e0e0e0" stroke="#9a9a9a" stroke-width="0.6"/><circle cx="7.2" cy="8.2" r="2.2" fill="#c8482a"/></svg><span class="tc l" style="left:13px">48646165</span>
<span class="tc" style="left:77.8px;width:131.8px;text-align:right">2020.02.28 10:15:01</span>
<b class="vsep" style="left:210.9px"></b>
<span class="tc" style="left:210.9px;width:59.5px;text-align:right">sell</span>
<b class="vsep" style="left:271.7px"></b>
<span class="tc" style="left:271.7px;width:45.4px;text-align:right">0.54</span>
<b class="vsep" style="left:318.4px"></b>
<span class="tc" style="left:318.4px;width:59.9px;text-align:right">eurgbp</span>
<b class="vsep" style="left:379.6px"></b>
<span class="tc" style="left:379.6px;width:58.5px;text-align:right">0.85579</span>
<b class="vsep" style="left:439.4px"></b>
<span class="tc" style="left:439.4px;width:58.4px;text-align:right">0.00000</span>
<b class="vsep" style="left:499.1px"></b>
<span class="tc" style="left:499.1px;width:60.1px;text-align:right">0.85722</span>
<b class="vsep" style="left:560.5px"></b>
<span class="tc" style="left:560.5px;width:131.9px;text-align:right">2020.03.09 04:50:43</span>
<b class="vsep" style="left:693.7px"></b>
<span class="tc" style="left:693.7px;width:59.0px;text-align:right">0.87594</span>
<b class="vsep" style="left:754.0px"></b>
<span class="tc" style="left:754.0px;width:59.1px;text-align:right">-1.00</span>
<b class="vsep" style="left:814.4px"></b>
<span class="tc" style="left:814.4px;width:65.2px;text-align:right">-1 427.12</span>
<b class="vsep" style="left:880.9px"></b>
<span class="tc" style="left:880.9px;width:186.8px;text-align:right">so: 21.2%/217.1/1024.1</span>
<b class="vsep" style="left:77.8px"></b>
</div>
<div class="abs trow wh" style="top:497.60px;left:13.5px;width:1069.0px;height:11.41px">
<svg class="abs" style="left:0.8px;top:0.5px" width="10" height="11"><path d="M1.5 0.8h4l2.5 2.5v6.5h-6.5z" fill="#fbfbfb" stroke="#8c8c8c" stroke-width="0.7"/><path d="M5.5 0.8v2.5h2.5" fill="#e0e0e0" stroke="#9a9a9a" stroke-width="0.6"/><circle cx="7.2" cy="8.2" r="2.2" fill="#c8482a"/></svg><span class="tc l" style="left:13px">48512205</span>
<span class="tc" style="left:77.8px;width:131.8px;text-align:right">2020.02.27 02:10:03</span>
<b class="vsep" style="left:210.9px"></b>
<span class="tc" style="left:210.9px;width:59.5px;text-align:right">sell</span>
<b class="vsep" style="left:271.7px"></b>
<span class="tc" style="left:271.7px;width:45.4px;text-align:right">0.21</span>
<b class="vsep" style="left:318.4px"></b>
<span class="tc" style="left:318.4px;width:59.9px;text-align:right">eurcad</span>
<b class="vsep" style="left:379.6px"></b>
<span class="tc" style="left:379.6px;width:58.5px;text-align:right">1.45489</span>
<b class="vsep" style="left:439.4px"></b>
<span class="tc" style="left:439.4px;width:58.4px;text-align:right">0.00000</span>
<b class="vsep" style="left:499.1px"></b>
<span class="tc" style="left:499.1px;width:60.1px;text-align:right">1.45900</span>
<b class="vsep" style="left:560.5px"></b>
<span class="tc" style="left:560.5px;width:131.9px;text-align:right">2020.03.09 04:50:43</span>
<b class="vsep" style="left:693.7px"></b>
<span class="tc" style="left:693.7px;width:59.0px;text-align:right">1.57876</span>
<b class="vsep" style="left:754.0px"></b>
<span class="tc" style="left:754.0px;width:59.1px;text-align:right">6.77</span>
<b class="vsep" style="left:814.4px"></b>
<span class="tc" style="left:814.4px;width:65.2px;text-align:right">-1 892.84</span>
<b class="vsep" style="left:880.9px"></b>
<span class="tc" style="left:880.9px;width:186.8px;text-align:right">so: 49.4%/215.8/436.7</span>
<b class="vsep" style="left:77.8px"></b>
</div>
<div class="abs trow alt" style="top:508.96px;left:13.5px;width:1069.0px;height:11.41px">
<svg class="abs" style="left:0.8px;top:0.5px" width="10" height="11"><path d="M1.5 0.8h4l2.5 2.5v6.5h-6.5z" fill="#fbfbfb" stroke="#8c8c8c" stroke-width="0.7"/><path d="M5.5 0.8v2.5h2.5" fill="#e0e0e0" stroke="#9a9a9a" stroke-width="0.6"/><circle cx="7.2" cy="8.2" r="2.2" fill="#3a88c0"/></svg><span class="tc l" style="left:13px">48643761</span>
<span class="tc" style="left:77.8px;width:131.8px;text-align:right">2020.02.28 09:55:12</span>
<b class="vsep" style="left:210.9px"></b>
<span class="tc" style="left:210.9px;width:59.5px;text-align:right">buy</span>
<b class="vsep" style="left:271.7px"></b>
<span class="tc" style="left:271.7px;width:45.4px;text-align:right">0.21</span>
<b class="vsep" style="left:318.4px"></b>
<span class="tc" style="left:318.4px;width:59.9px;text-align:right">gbpjpy</span>
<b class="vsep" style="left:379.6px"></b>
<span class="tc" style="left:379.6px;width:58.5px;text-align:right">140.001</span>
<b class="vsep" style="left:439.4px"></b>
<span class="tc" style="left:439.4px;width:58.4px;text-align:right">0.000</span>
<b class="vsep" style="left:499.1px"></b>
<span class="tc" style="left:499.1px;width:60.1px;text-align:right">139.471</span>
<b class="vsep" style="left:560.5px"></b>
<span class="tc" style="left:560.5px;width:131.9px;text-align:right">2020.03.09 04:50:43</span>
<b class="vsep" style="left:693.7px"></b>
<span class="tc" style="left:693.7px;width:59.0px;text-align:right">133.346</span>
<b class="vsep" style="left:754.0px"></b>
<span class="tc" style="left:754.0px;width:59.1px;text-align:right">1.04</span>
<b class="vsep" style="left:814.4px"></b>
<span class="tc" style="left:814.4px;width:65.2px;text-align:right">-1 374.71</span>
<b class="vsep" style="left:880.9px"></b>
<span class="tc" style="left:880.9px;width:186.8px;text-align:right">so: 19.4%/222.6/1146.7</span>
<b class="vsep" style="left:77.8px"></b>
</div>
<div class="abs trow wh" style="top:520.32px;left:13.5px;width:1069.0px;height:11.41px">
<svg class="abs" style="left:0.8px;top:0.5px" width="10" height="11"><path d="M1.5 0.8h4l2.5 2.5v6.5h-6.5z" fill="#fbfbfb" stroke="#8c8c8c" stroke-width="0.7"/><path d="M5.5 0.8v2.5h2.5" fill="#e0e0e0" stroke="#9a9a9a" stroke-width="0.6"/><circle cx="7.2" cy="8.2" r="2.2" fill="#c8482a"/></svg><span class="tc l" style="left:13px">49192509</span>
<span class="tc" style="left:77.8px;width:131.8px;text-align:right">2020.02.28 18:25:01</span>
<b class="vsep" style="left:210.9px"></b>
<span class="tc" style="left:210.9px;width:59.5px;text-align:right">sell</span>
<b class="vsep" style="left:271.7px"></b>
<span class="tc" style="left:271.7px;width:45.4px;text-align:right">0.90</span>
<b class="vsep" style="left:318.4px"></b>
<span class="tc" style="left:318.4px;width:59.9px;text-align:right">eurgbp</span>
<b class="vsep" style="left:379.6px"></b>
<span class="tc" style="left:379.6px;width:58.5px;text-align:right">0.86193</span>
<b class="vsep" style="left:439.4px"></b>
<span class="tc" style="left:439.4px;width:58.4px;text-align:right">0.00000</span>
<b class="vsep" style="left:499.1px"></b>
<span class="tc" style="left:499.1px;width:60.1px;text-align:right">0.85722</span>
<b class="vsep" style="left:560.5px"></b>
<span class="tc" style="left:560.5px;width:131.9px;text-align:right">2020.03.09 04:50:43</span>
<b class="vsep" style="left:693.7px"></b>
<span class="tc" style="left:693.7px;width:59.0px;text-align:right">0.87593</span>
<b class="vsep" style="left:754.0px"></b>
<span class="tc" style="left:754.0px;width:59.1px;text-align:right">-1.67</span>
<b class="vsep" style="left:814.4px"></b>
<span class="tc" style="left:814.4px;width:65.2px;text-align:right">-1 652.59</span>
<b class="vsep" style="left:880.9px"></b>
<span class="tc" style="left:880.9px;width:186.8px;text-align:right">so: 31.6%/214.4/678.5</span>
<b class="vsep" style="left:77.8px"></b>
</div>
<div class="abs trow alt" style="top:531.68px;left:13.5px;width:1069.0px;height:11.41px">
<svg class="abs" style="left:0.8px;top:0.5px" width="10" height="11"><path d="M1.5 0.8h4l2.5 2.5v6.5h-6.5z" fill="#fbfbfb" stroke="#8c8c8c" stroke-width="0.7"/><path d="M5.5 0.8v2.5h2.5" fill="#e0e0e0" stroke="#9a9a9a" stroke-width="0.6"/><circle cx="7.2" cy="8.2" r="2.2" fill="#c8482a"/></svg><span class="tc l" style="left:13px">48701542</span>
<span class="tc" style="left:77.8px;width:131.8px;text-align:right">2020.02.28 18:00:13</span>
<b class="vsep" style="left:210.9px"></b>
<span class="tc" style="left:210.9px;width:59.5px;text-align:right">sell</span>
<b class="vsep" style="left:271.7px"></b>
<span class="tc" style="left:271.7px;width:45.4px;text-align:right">0.86</span>
<b class="vsep" style="left:318.4px"></b>
<span class="tc" style="left:318.4px;width:59.9px;text-align:right">eurgbp</span>
<b class="vsep" style="left:379.6px"></b>
<span class="tc" style="left:379.6px;width:58.5px;text-align:right">0.85967</span>
<b class="vsep" style="left:439.4px"></b>
<span class="tc" style="left:439.4px;width:58.4px;text-align:right">0.00000</span>
<b class="vsep" style="left:499.1px"></b>
<span class="tc" style="left:499.1px;width:60.1px;text-align:right">0.85722</span>
<b class="vsep" style="left:560.5px"></b>
<span class="tc" style="left:560.5px;width:131.9px;text-align:right">2020.03.09 04:50:43</span>
<b class="vsep" style="left:693.7px"></b>
<span class="tc" style="left:693.7px;width:59.0px;text-align:right">0.87593</span>
<b class="vsep" style="left:754.0px"></b>
<span class="tc" style="left:754.0px;width:59.1px;text-align:right">-1.60</span>
<b class="vsep" style="left:814.4px"></b>
<span class="tc" style="left:814.4px;width:65.2px;text-align:right">-1 834.07</span>
<b class="vsep" style="left:880.9px"></b>
<span class="tc" style="left:880.9px;width:186.8px;text-align:right">so: 45.6%/221.3/485.0</span>
<b class="vsep" style="left:77.8px"></b>
</div>
<div class="abs trow wh" style="top:543.04px;left:13.5px;width:1069.0px;height:11.41px">
<svg class="abs" style="left:0.8px;top:0.5px" width="10" height="11"><path d="M1.5 0.8h4l2.5 2.5v6.5h-6.5z" fill="#fbfbfb" stroke="#8c8c8c" stroke-width="0.7"/><path d="M5.5 0.8v2.5h2.5" fill="#e0e0e0" stroke="#9a9a9a" stroke-width="0.6"/><circle cx="7.2" cy="8.2" r="2.2" fill="#3a88c0"/></svg><span class="tc l" style="left:13px">49213030</span>
<span class="tc" style="left:77.8px;width:131.8px;text-align:right">2020.03.06 06:00:00</span>
<b class="vsep" style="left:210.9px"></b>
<span class="tc" style="left:210.9px;width:59.5px;text-align:right">buy</span>
<b class="vsep" style="left:271.7px"></b>
<span class="tc" style="left:271.7px;width:45.4px;text-align:right">0.40</span>
<b class="vsep" style="left:318.4px"></b>
<span class="tc" style="left:318.4px;width:59.9px;text-align:right">usdjpy</span>
<b class="vsep" style="left:379.6px"></b>
<span class="tc" style="left:379.6px;width:58.5px;text-align:right">105.814</span>
<b class="vsep" style="left:439.4px"></b>
<span class="tc" style="left:439.4px;width:58.4px;text-align:right">0.000</span>
<b class="vsep" style="left:499.1px"></b>
<span class="tc" style="left:499.1px;width:60.1px;text-align:right">105.991</span>
<b class="vsep" style="left:560.5px"></b>
<span class="tc" style="left:560.5px;width:131.9px;text-align:right">2020.03.09 04:50:43</span>
<b class="vsep" style="left:693.7px"></b>
<span class="tc" style="left:693.7px;width:59.0px;text-align:right">101.651</span>
<b class="vsep" style="left:754.0px"></b>
<span class="tc" style="left:754.0px;width:59.1px;text-align:right">1.39</span>
<b class="vsep" style="left:814.4px"></b>
<span class="tc" style="left:814.4px;width:65.2px;text-align:right">-1 638.15</span>
<b class="vsep" style="left:880.9px"></b>
<span class="tc" style="left:880.9px;width:186.8px;text-align:right">so: 27.0%/237.6/880.1</span>
<b class="vsep" style="left:77.8px"></b>
</div>
<div class="abs trow alt" style="top:554.40px;left:13.5px;width:1069.0px;height:11.41px">
<svg class="abs" style="left:0.8px;top:0.5px" width="10" height="11"><path d="M1.5 0.8h4l2.5 2.5v6.5h-6.5z" fill="#fbfbfb" stroke="#8c8c8c" stroke-width="0.7"/><path d="M5.5 0.8v2.5h2.5" fill="#e0e0e0" stroke="#9a9a9a" stroke-width="0.6"/><circle cx="7.2" cy="8.2" r="2.2" fill="#c8482a"/></svg><span class="tc l" style="left:13px">48533480</span>
<span class="tc" style="left:77.8px;width:131.8px;text-align:right">2020.02.27 10:05:01</span>
<b class="vsep" style="left:210.9px"></b>
<span class="tc" style="left:210.9px;width:59.5px;text-align:right">sell</span>
<b class="vsep" style="left:271.7px"></b>
<span class="tc" style="left:271.7px;width:45.4px;text-align:right">0.34</span>
<b class="vsep" style="left:318.4px"></b>
<span class="tc" style="left:318.4px;width:59.9px;text-align:right">eurcad</span>
<b class="vsep" style="left:379.6px"></b>
<span class="tc" style="left:379.6px;width:58.5px;text-align:right">1.45671</span>
<b class="vsep" style="left:439.4px"></b>
<span class="tc" style="left:439.4px;width:58.4px;text-align:right">0.00000</span>
<b class="vsep" style="left:499.1px"></b>
<span class="tc" style="left:499.1px;width:60.1px;text-align:right">1.45900</span>
<b class="vsep" style="left:560.5px"></b>
<span class="tc" style="left:560.5px;width:131.9px;text-align:right">2020.03.09 04:50:43</span>
<b class="vsep" style="left:693.7px"></b>
<span class="tc" style="left:693.7px;width:59.0px;text-align:right">1.57880</span>
<b class="vsep" style="left:754.0px"></b>
<span class="tc" style="left:754.0px;width:59.1px;text-align:right">11.02</span>
<b class="vsep" style="left:814.4px"></b>
<span class="tc" style="left:814.4px;width:65.2px;text-align:right">-3 020.53</span>
<b class="vsep" style="left:880.9px"></b>
<span class="tc" style="left:880.9px;width:186.8px;text-align:right">so: 48.3%/216.2/447.6</span>
<b class="vsep" style="left:77.8px"></b>
</div>
<div class="abs" style="left:1082.5px;top:429.5px;width:9px;height:137px;background:#e9e9e9"></div>
<div class="abs" style="left:1082.5px;top:429.5px;width:9px;height:11px;background:#fff;border:0.8px solid #dcdcdc"></div>
<svg class="abs" style="left:1082.5px;top:430px" width="10" height="10"><path d="M2 6l2.5-2.5 2.5 2.5" stroke="#666" stroke-width="1" fill="none"/></svg>
<div class="abs" style="left:1083px;top:471px;width:8px;height:17px;background:#cfcfcf"></div>
<svg class="abs" style="left:1083px;top:475.5px" width="10" height="8"><path d="M2 1.5h4.5M2 3.5h4.5M2 5.5h4.5" stroke="#666" stroke-width="0.7"/></svg>
<div class="abs" style="left:1082.5px;top:555.5px;width:9px;height:11px;background:#fff"></div>
<svg class="abs" style="left:1082.5px;top:556px" width="10" height="10"><path d="M2 4l2.5 2.5 2.5-2.5" stroke="#666" stroke-width="1" fill="none"/></svg>
<div class="abs" style="left:13.5px;top:566.5px;width:1078px;height:1px;background:#444"></div>
<div class="abs tabs" style="left:13px;top:567px;width:1080px;height:12px"><span style="left:7px">Trade</span><span style="left:30px;color:#c0c0c0">|</span><span style="left:36px">Exposure</span><span style="left:135px">News<sub style="color:#e04848;font-size:5.6px;vertical-align:-2px;margin-left:0.5px">99</sub></span><span style="left:165px;color:#a0a0a0">|</span><span style="left:170px">Alerts</span><span style="left:193.5px;color:#a0a0a0">|</span><span style="left:199px">Mailbox<sub style="color:#e04848;font-size:5.6px;vertical-align:-2px">6</sub></span><span style="left:233px;color:#a0a0a0">|</span><span style="left:238.5px">Market<sub style="color:#e04848;font-size:5.6px;vertical-align:-2px;margin-left:0.5px">110</sub></span><span style="left:275px;color:#a0a0a0">|</span><span style="left:282px">Signals</span><span style="left:308px;color:#c0c0c0">|</span><span style="left:314px">Articles</span><span style="left:342px;color:#c0c0c0">|</span><span style="left:348px">Code Base</span><span style="left:385px;color:#c0c0c0">|</span><span style="left:390px">Experts</span><span style="left:417px;color:#c0c0c0">|</span><span style="left:423px">Journal</span><span style="left:451px;color:#c0c0c0">|</span></div>
<div class="abs" style="left:82px;top:566.5px;width:60px;height:12.5px;background:#fff;border:1px solid #666;border-top:0;font-size:6.6px;text-align:center;line-height:11px;color:#222;white-space:nowrap">Account History</div>
<div class="abs" style="left:4px;top:581px;width:1090px;height:14.5px;background:#f0f0f0;border-top:1px solid #e2e2e2"></div>
<div class="abs" style="left:6px;top:585px;font-size:6.6px;color:#222;line-height:9px;white-space:nowrap">For Help, press F1</div>
<div class="st" style="left:686.5px"></div>
<div class="st" style="left:752px"></div>
<div class="st" style="left:810.8px"></div>
<div class="st" style="left:851.6px"></div>
<div class="st" style="left:892.4px"></div>
<div class="st" style="left:931.6px"></div>
<div class="st" style="left:971.3px"></div>
<div class="st" style="left:1009.5px"></div>
<div class="abs" style="left:690px;top:585px;font-size:6.6px;color:#333;line-height:9px">Default</div>
<svg class="abs" style="left:1012px;top:585px" width="14" height="8"><defs><linearGradient id="sg" x1="0" y1="0" x2="0" y2="1"><stop offset="0" stop-color="#7aa644"/><stop offset="1" stop-color="#1e4a66"/></linearGradient></defs><rect width="14" height="8" fill="url(#sg)"/><path d="M0 6L4 5 8 4 14 1" stroke="#d8f0d0" stroke-width="0.7" fill="none"/><path d="M3 0v8M6 0v8M9 0v8M12 0v8" stroke="#2a5a3a" stroke-width="0.5" opacity="0.5"/></svg>
<svg class="abs" style="left:1084px;top:586px" width="10" height="10"><path d="M9 1L1 9M9 4L4 9M9 7L7 9" stroke="#b8b8b8" stroke-width="0.9"/></svg>
<div class="abs" style="left:1028px;top:585px;font-size:6.6px;color:#222;line-height:9px">2277/6 kb</div>
</body></html>
